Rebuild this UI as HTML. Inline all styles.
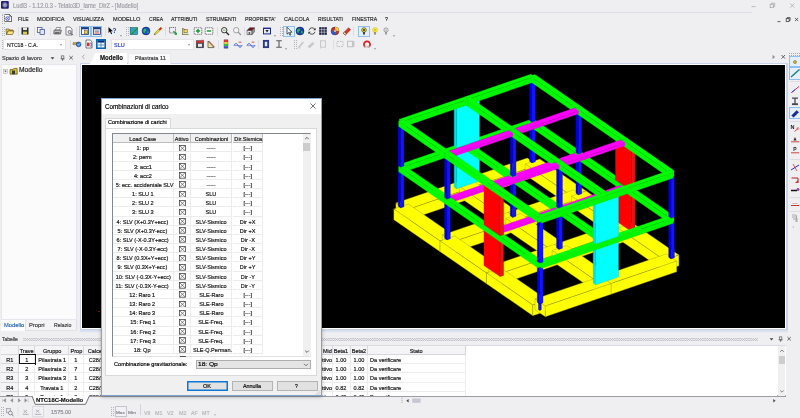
<!DOCTYPE html>
<html><head><meta charset="utf-8"><title>Ludi3</title><style>
*{box-sizing:border-box;margin:0;padding:0}
html,body{width:800px;height:418px;overflow:hidden;background:#efeff2;font-family:"Liberation Sans",sans-serif;}
#app{will-change:transform;position:relative;width:800px;height:418px;background:#efeff2;overflow:hidden;font-size:7px;color:#1e1e1e}
.abs{position:absolute}
.t{position:absolute;white-space:nowrap;line-height:1;-webkit-text-stroke:0.18px}
.ico{position:absolute;width:9px;height:9px}
.hl{position:absolute;border:1px solid #8cc0ee;background:#e3f0fc}
.combo{position:absolute;background:#fff;border:1px solid #e3e3e8}
.grip{position:absolute;width:3px;border-left:1px dotted #b4b4bc;border-right:1px dotted #b4b4bc}
.dd{position:absolute;width:0;height:0;border-left:1.6px solid transparent;border-right:1.6px solid transparent;border-top:2px solid #444}
table{border-collapse:collapse}
.cell{-webkit-text-stroke:0.18px;position:absolute;white-space:nowrap;text-align:center;line-height:9.14px;height:9.14px;font-size:6.3px;color:#111;overflow:visible}
.cb{position:absolute;width:5.4px;height:5.6px;border:0.7px solid #333;background:#fff}
.btn{position:absolute;background:#e1e1e1;border:1px solid #b4b4b4;text-align:center;font-size:6.6px;line-height:9px;color:#000}
</style></head><body><div id="app">
<div class="abs" style="left:0;top:0;width:800px;height:12px;background:#efeff2"></div>
<div class="abs" style="left:0;top:11.6px;width:752px;height:1px;background:#dcdeec"></div>
<svg class="abs" style="left:1px;top:1.4px" width="8" height="8" viewBox="0 0 8 8"><rect x="0" y="0" width="7.8" height="7.8" rx="1" fill="#22226e"/><circle cx="3.9" cy="3.9" r="2.3" fill="#c8cce8" stroke="#8a90c8" stroke-width="0.5"/><path d="M3.9 1.2v5.4M1.2 3.9h5.4M2 2l3.8 3.8M5.8 2L2 5.8" stroke="#22226e" stroke-width="0.55"/><circle cx="3.9" cy="3.9" r="0.8" fill="#f0f0ff"/></svg>
<div class="t" style="left:12.6px;top:2.6px;font-size:6.3px;color:#9c9ca4;transform-origin:0 0;transform:scaleX(0.912);">Ludi3 - 1.12.0.3 - Telaio3D_lame_DirZ - [Modello]</div>
<svg class="abs" style="left:739.5px;top:0" width="60" height="12" viewBox="0 0 60 12"><g stroke="#a9a9b0" stroke-width="0.8" fill="none"><path d="M11.5 6.6h4"/><rect x="30.2" y="4.3" width="3.3" height="3.3"/><path d="M31.4 4.3v-1.1h3.3v3.3h-1.2"/><path d="M50.3 3.6l4 4M54.3 3.6l-4 4"/></g></svg>
<div class="menu">
<svg class="abs" style="left:3.8px;top:13.8px" width="8" height="8" viewBox="0 0 8 8"><path d="M0.4 0.4h5l2.2 2.2v5H0.4z" fill="#fff" stroke="#222" stroke-width="0.7"/><path d="M5.4 0.4v2.2h2.2" fill="none" stroke="#222" stroke-width="0.5"/><circle cx="3.6" cy="4.6" r="1.9" fill="#dfe4ff" stroke="#3a48b8" stroke-width="0.7"/><path d="M2.3 3.3l2.6 2.6M4.9 3.3L2.3 5.900" stroke="#3a48b8" stroke-width="0.5"/></svg>
<div class="t" style="left:17.5px;top:15.6px;font-size:6.0px;color:#2a2a2a;transform-origin:0 0;transform:scaleX(0.829);">FILE</div>
<div class="t" style="left:37.0px;top:15.6px;font-size:6.0px;color:#2a2a2a;transform-origin:0 0;transform:scaleX(0.938);">MODIFICA</div>
<div class="t" style="left:73.0px;top:15.6px;font-size:6.0px;color:#2a2a2a;transform-origin:0 0;transform:scaleX(0.903);">VISUALIZZA</div>
<div class="t" style="left:112.5px;top:15.6px;font-size:6.0px;color:#2a2a2a;transform-origin:0 0;transform:scaleX(0.937);">MODELLO</div>
<div class="t" style="left:148.5px;top:15.6px;font-size:6.0px;color:#2a2a2a;transform-origin:0 0;transform:scaleX(0.840);">CREA</div>
<div class="t" style="left:170.5px;top:15.6px;font-size:6.0px;color:#2a2a2a;transform-origin:0 0;transform:scaleX(0.867);">ATTRIBUTI</div>
<div class="t" style="left:205.5px;top:15.6px;font-size:6.0px;color:#2a2a2a;transform-origin:0 0;transform:scaleX(0.871);">STRUMENTI</div>
<div class="t" style="left:244.5px;top:15.6px;font-size:6.0px;color:#2a2a2a;transform-origin:0 0;transform:scaleX(0.862);">PROPRIETA'</div>
<div class="t" style="left:283.5px;top:15.6px;font-size:6.0px;color:#2a2a2a;transform-origin:0 0;transform:scaleX(0.910);">CALCOLA</div>
<div class="t" style="left:317.5px;top:15.6px;font-size:6.0px;color:#2a2a2a;transform-origin:0 0;transform:scaleX(0.852);">RISULTATI</div>
<div class="t" style="left:352.0px;top:15.6px;font-size:6.0px;color:#2a2a2a;transform-origin:0 0;transform:scaleX(0.843);">FINESTRA</div>
<div class="t" style="left:385.0px;top:15.6px;font-size:6.0px;color:#2a2a2a;transform-origin:0 0;transform:scaleX(0.899);">?</div>
</div>
<svg class="abs" style="left:770px;top:14px" width="30" height="12" viewBox="0 0 30 12"><g stroke="#3c3c3c" stroke-width="0.8" fill="none"><path d="M7.5 7.6h3"/><rect x="16.2" y="4.6" width="2.9" height="2.9"/><path d="M17.2 4.6v-1h2.9v2.9h-1"/><path d="M25 3.9l3.2 3.2M28.2 3.9L25 7.1"/></g></svg>
<div class="hl" style="left:79.0px;top:25.6px;width:11.5px;height:11.4px"></div>
<div class="hl" style="left:90.5px;top:25.6px;width:11.5px;height:11.4px"></div>
<div class="hl" style="left:283.0px;top:25.6px;width:11.5px;height:11.4px"></div>
<div class="hl" style="left:358.0px;top:25.6px;width:11.5px;height:11.4px"></div>
<svg class="abs" style="left:4.5px;top:26.2px" width="10" height="10" viewBox="0 0 10 10"><path d="M1 3h3l1 1h3v1H3L1.5 8.5z" fill="#e8c84a" stroke="#5a4a10" stroke-width="0.6"/><path d="M1.5 8.5L3 5h6L7.5 8.5z" fill="#f7e38a" stroke="#5a4a10" stroke-width="0.6"/></svg>
<svg class="abs" style="left:20.0px;top:26.2px" width="10" height="10" viewBox="0 0 10 10"><rect x="1.5" y="1.5" width="7" height="7" fill="#2a2a2a"/><rect x="3" y="1.5" width="4" height="2.6" fill="#e8e8e8"/><rect x="3" y="5.6" width="4" height="2.9" fill="#d8d040"/></svg>
<svg class="abs" style="left:35.5px;top:26.2px" width="10" height="10" viewBox="0 0 10 10"><rect x="1.5" y="1.5" width="4.5" height="5" fill="#fff" stroke="#33448a" stroke-width="0.7"/><rect x="4" y="3.5" width="4.5" height="5" fill="#dfe6ff" stroke="#33448a" stroke-width="0.7"/></svg>
<svg class="abs" style="left:52.5px;top:26.2px" width="10" height="10" viewBox="0 0 10 10"><path d="M2.5 4l1-2.5h4l-1 2.5z" fill="#fff" stroke="#333" stroke-width="0.5"/><path d="M1 4.2h7.4l-1 3.8H0.8z" fill="#bdbdbd" stroke="#333" stroke-width="0.6"/><rect x="2" y="6.3" width="4.5" height="1.2" fill="#444"/></svg>
<svg class="abs" style="left:63.5px;top:26.2px" width="10" height="10" viewBox="0 0 10 10"><path d="M2 1h4l2 2v6H2z" fill="#fff" stroke="#333" stroke-width="0.6"/><circle cx="5.6" cy="6" r="1.6" fill="#cfe0ff" stroke="#333" stroke-width="0.6"/><path d="M6.8 7.2L8.8 9.2" stroke="#333" stroke-width="0.9"/></svg>
<svg class="abs" style="left:79.5px;top:26.2px" width="10" height="10" viewBox="0 0 10 10"><rect x="1.5" y="1.5" width="7" height="7" fill="#fff" stroke="#1a3a7a" stroke-width="0.8"/><rect x="1.5" y="1.5" width="7" height="1.8" fill="#1a3a7a"/><rect x="4.2" y="4.6" width="3.4" height="3.4" fill="#f0d040" stroke="#444" stroke-width="0.5"/></svg>
<svg class="abs" style="left:91.5px;top:26.2px" width="10" height="10" viewBox="0 0 10 10"><rect x="1.5" y="1.5" width="7" height="7" fill="#fff" stroke="#1a3a7a" stroke-width="0.8"/><rect x="1.5" y="1.5" width="7" height="1.8" fill="#1a3a7a"/><rect x="2.6" y="4.4" width="4.8" height="1.4" fill="#8a8a9a"/><rect x="2.6" y="6.5" width="4.8" height="1" fill="#c04040"/></svg>
<svg class="abs" style="left:107.0px;top:26.2px" width="10" height="10" viewBox="0 0 10 10"><path d="M1.5 1v6l1.5-1.4 1.1 2.6 1-.4-1.1-2.5H6z" fill="#111"/><text x="5.6" y="6.5" font-size="6.5" font-weight="bold" fill="#1a3a9a" font-family="Liberation Sans,sans-serif">?</text></svg>
<svg class="abs" style="left:128.5px;top:26.2px" width="10" height="10" viewBox="0 0 10 10"><rect x="1.2" y="1.6" width="7.4" height="7" fill="#30a0c8" stroke="#144" stroke-width="0.5"/><path d="M2 8L8.4 2" stroke="#30c040" stroke-width="1.6"/><path d="M2 8.6L8.6 2" stroke="#124" stroke-width="0.5"/></svg>
<svg class="abs" style="left:140.5px;top:26.2px" width="10" height="10" viewBox="0 0 10 10"><circle cx="5" cy="5" r="3.9" fill="#1a50c8" stroke="#0a1a50" stroke-width="0.6"/><path d="M3 3.2c1.2-.8 2.4-.2 2.2 1.1-.2 1.2-1.6.8-1.4 2.2.1.9-1 .6-1.4-.6-.3-1 .1-2.2.6-2.7z" fill="#30c048"/><path d="M6.4 5.4c.9-.3 1.6.3 1.2 1.3-.4.9-1.1 1.1-1.3.3z" fill="#30c048"/></svg>
<svg class="abs" style="left:152.5px;top:26.2px" width="10" height="10" viewBox="0 0 10 10"><path d="M1.2 8.8l1-2.2L7.800 1.200l1.200 1.200-5.400 5.400z" fill="#e8d838" stroke="#5a5010" stroke-width="0.400"/><path d="M5.600 3.400L7.800 1.200l1.200 1.200-2.200 2.200z" fill="#e02818"/><path d="M1.200 8.800l.5-1.200.7.700z" fill="#222"/></svg>
<svg class="abs" style="left:167.5px;top:26.2px" width="10" height="10" viewBox="0 0 10 10"><rect x="1.5" y="1.5" width="6" height="5.4" fill="none" stroke="#222" stroke-width="0.7" stroke-dasharray="1 0.8"/><path d="M5.4 5.2l3.4 3.2" stroke="#1a8a3a" stroke-width="1.1"/><rect x="6.6" y="6.6" width="2.2" height="2.2" fill="#2a9a4a"/></svg>
<svg class="abs" style="left:180.0px;top:26.2px" width="10" height="10" viewBox="0 0 10 10"><path d="M2 8.4h6.6M2.6 8.4V2" stroke="#6a6a20" stroke-width="0.8"/><rect x="4" y="3.6" width="3.2" height="3.2" fill="#f0e060" stroke="#444" stroke-width="0.5"/><path d="M3 2.6l2 1" stroke="#c03030" stroke-width="0.7"/></svg>
<svg class="abs" style="left:192.5px;top:26.2px" width="10" height="10" viewBox="0 0 10 10"><rect x="1.2" y="1.8" width="7.6" height="6.4" fill="#fff" stroke="#222" stroke-width="0.7" stroke-dasharray="1.2 0.8"/><path d="M2.8 5h4.4M5 3v4" stroke="#10a030" stroke-width="1.5"/></svg>
<svg class="abs" style="left:204.0px;top:26.2px" width="10" height="10" viewBox="0 0 10 10"><rect x="1.2" y="1.8" width="7.6" height="6.4" fill="#fff" stroke="#222" stroke-width="0.7" stroke-dasharray="1.2 0.8"/><path d="M2.8 5h4.4" stroke="#10a030" stroke-width="1.5"/></svg>
<svg class="abs" style="left:219.5px;top:26.2px" width="10" height="10" viewBox="0 0 10 10"><circle cx="4.2" cy="4.2" r="2.7" fill="#f4f8e8" stroke="#222" stroke-width="0.9"/><path d="M6.2 6.2L9 9" stroke="#222" stroke-width="1.3"/><path d="M3 4.2h2.4" stroke="#1a8a3a" stroke-width="0.7"/></svg>
<svg class="abs" style="left:231.5px;top:26.2px" width="10" height="10" viewBox="0 0 10 10"><circle cx="4.2" cy="4.2" r="2.7" fill="#f4f4f4" stroke="#9a9a9a" stroke-width="0.9"/><path d="M6.2 6.2L9 9" stroke="#9a9a9a" stroke-width="1.3"/></svg>
<svg class="abs" style="left:246.0px;top:26.2px" width="10" height="10" viewBox="0 0 10 10"><path d="M1 4.6l2.600-2.800h4.800L6 4.600z" fill="#7a1414" stroke="#222" stroke-width="0.5"/><path d="M1 4.600h5v4H1z" fill="#f0f0f0" stroke="#222" stroke-width="0.5"/><path d="M6 4.600l2.400-2.800v4L6 8.600z" fill="#9a9a9a" stroke="#222" stroke-width="0.5"/><rect x="2.600" y="6" width="1.600" height="2.600" fill="#555"/></svg>
<svg class="abs" style="left:261.5px;top:26.2px" width="10" height="10" viewBox="0 0 10 10"><rect x="1" y="1.6" width="8" height="6.8" fill="#1a2a8a"/><rect x="2" y="3" width="6" height="4.4" fill="#e8ecff"/><path d="M3.4 4h3.4L5 6.6z" fill="#222"/></svg>
<svg class="abs" style="left:283.5px;top:26.2px" width="10" height="10" viewBox="0 0 10 10"><path d="M3 1.2v7l1.7-1.6 1.2 2.6 1-.5-1.2-2.5H8z" fill="#fff" stroke="#111" stroke-width="0.7"/></svg>
<svg class="abs" style="left:295.0px;top:26.2px" width="10" height="10" viewBox="0 0 10 10"><circle cx="5" cy="5" r="4" fill="#1840b0" stroke="#081440" stroke-width="0.5"/><path d="M2.6 3c1.4-1.2 3-.4 2.6 1-.3 1.3-1.7 1-1.6 2.4.1 1-1.2.8-1.6-.6-.3-1 0-2.200.6-2.800z" fill="#28b840"/><path d="M6.200 5.200c1-.4 2 .4 1.600 1.500-.5 1-1.400 1.200-1.600.300z" fill="#28b840"/></svg>
<svg class="abs" style="left:306.5px;top:26.2px" width="10" height="10" viewBox="0 0 10 10"><path d="M2 4.200a3.200 3.200 0 0 1 6-0.600M8 5.800a3.200 3.200 0 0 1-6 .6" fill="none" stroke="#3a3a3a" stroke-width="0.9"/><path d="M8.600 1.800v2.400H6.200zM1.400 8.200V5.800h2.400z" fill="#3a3a3a"/></svg>
<svg class="abs" style="left:317.5px;top:26.2px" width="10" height="10" viewBox="0 0 10 10"><rect x="1.200" y="1.200" width="7.600" height="7.600" fill="#1a1a3a"/><path d="M1.200 3.700h7.600M1.200 6.200h7.600M3.700 1.200v7.600M6.200 1.200v7.600" stroke="#e8e8f0" stroke-width="0.600"/></svg>
<svg class="abs" style="left:330.0px;top:26.2px" width="10" height="10" viewBox="0 0 10 10"><circle cx="5" cy="5" r="3.900" fill="#d03030" stroke="#222" stroke-width="0.500"/><path d="M5 5V1.100A3.900 3.900 0 0 1 8.900 5z" fill="#f0d030"/><path d="M5 5H1.100A3.900 3.900 0 0 0 5 8.900z" fill="#2a5ad0"/><circle cx="5" cy="5" r="1.300" fill="#e8e8e8" stroke="#333" stroke-width="0.400"/></svg>
<svg class="abs" style="left:342.0px;top:26.2px" width="10" height="10" viewBox="0 0 10 10"><path d="M1.200 7.200L6.600 1.800l2 2L3.200 9.200z" fill="#d03828" stroke="#601008" stroke-width="0.400"/><path d="M1.200 7.200l1.300-1.300 2 2L3.200 9.200z" fill="#f0e0a0" stroke="#601008" stroke-width="0.400"/></svg>
<svg class="abs" style="left:358.5px;top:26.2px" width="10" height="10" viewBox="0 0 10 10"><circle cx="5" cy="4" r="2.300" fill="#f8e820" stroke="#222" stroke-width="0.600"/><rect x="4.200" y="6" width="1.600" height="2.600" fill="#222"/><circle cx="5" cy="4" r="0.900" fill="#222"/></svg>
<svg class="abs" style="left:370.0px;top:26.2px" width="10" height="10" viewBox="0 0 10 10"><circle cx="5" cy="4" r="2.400" fill="#f8f040" stroke="#c8c020" stroke-width="0.600"/><rect x="4.400" y="6.200" width="1.200" height="2.400" fill="#55553a"/><circle cx="5" cy="4" r="0.700" fill="#8a8a20"/></svg>
<svg class="abs" style="left:381.0px;top:26.2px" width="10" height="10" viewBox="0 0 10 10"><circle cx="5" cy="4" r="2.100" fill="#f4f4f4" stroke="#6a6a6a" stroke-width="0.600"/><rect x="4.500" y="6" width="1" height="2.600" fill="#5a5a5a"/><circle cx="5" cy="4" r="0.600" fill="#444"/></svg>
<div class="dd" style="left:119.9px;top:34.5px;border-top-color:#555;transform:scale(.7)"></div>
<div class="dd" style="left:273.9px;top:34.5px;border-top-color:#555;transform:scale(.7)"></div>
<div class="dd" style="left:392.9px;top:34.5px;border-top-color:#555;transform:scale(.7)"></div>
<div class="grip" style="left:1.5px;top:14px;height:10px"></div>
<div class="grip" style="left:1.5px;top:27px;height:9px"></div>
<div class="grip" style="left:279.5px;top:27px;height:9px"></div>
<div class="grip" style="left:125.5px;top:27px;height:9px"></div>
<div class="grip" style="left:1.5px;top:40px;height:9px"></div>
<div class="grip" style="left:293.5px;top:40px;height:9px"></div>
<div class="abs" style="left:18.3px;top:27px;width:1px;height:9px;background:#dcdce2"></div>
<div class="abs" style="left:34.0px;top:27px;width:1px;height:9px;background:#dcdce2"></div>
<div class="abs" style="left:49.5px;top:27px;width:1px;height:9px;background:#dcdce2"></div>
<div class="abs" style="left:76.0px;top:27px;width:1px;height:9px;background:#dcdce2"></div>
<div class="abs" style="left:104.5px;top:27px;width:1px;height:9px;background:#dcdce2"></div>
<div class="abs" style="left:165.0px;top:27px;width:1px;height:9px;background:#dcdce2"></div>
<div class="abs" style="left:217.0px;top:27px;width:1px;height:9px;background:#dcdce2"></div>
<div class="abs" style="left:244.0px;top:27px;width:1px;height:9px;background:#dcdce2"></div>
<div class="abs" style="left:353.0px;top:27px;width:1px;height:9px;background:#dcdce2"></div>
<div class="abs" style="left:69.5px;top:40px;width:1px;height:9px;background:#dcdce2"></div>
<div class="abs" style="left:217.5px;top:40px;width:1px;height:9px;background:#dcdce2"></div>
<div class="abs" style="left:257.5px;top:40px;width:1px;height:9px;background:#dcdce2"></div>
<div class="abs" style="left:319.5px;top:40px;width:1px;height:9px;background:#dcdce2"></div>
<div class="abs" style="left:333.0px;top:40px;width:1px;height:9px;background:#dcdce2"></div>
<div class="combo" style="left:3px;top:38.6px;width:62.5px;height:11.2px"></div>
<div class="t" style="left:6.5px;top:41.6px;font-size:6.0px;color:#222;transform-origin:0 0;transform:scaleX(0.861);">NTC18 - C.A.</div>
<div class="dd" style="left:60px;top:44px;transform:scale(.8)"></div>
<div class="combo" style="left:110.5px;top:38.6px;width:83px;height:11.2px"></div>
<div class="t" style="left:113.8px;top:41.6px;font-size:6.0px;color:#2a3ac8;transform-origin:0 0;transform:scaleX(0.917);">SLU</div>
<div class="dd" style="left:188px;top:44px;transform:scale(.8)"></div>
<svg class="abs" style="left:72.0px;top:39.2px" width="10" height="10" viewBox="0 0 10 10"><path d="M1 3.600h4.600v2H1z" fill="#d8b020" stroke="#5a4a10" stroke-width="0.400"/><circle cx="6.600" cy="5.400" r="2.400" fill="#2a7ad8" stroke="#0a2a6a" stroke-width="0.500"/><path d="M5.600 5.400l.8.800 1.400-1.600" stroke="#fff" stroke-width="0.700" fill="none"/></svg>
<svg class="abs" style="left:84.0px;top:39.2px" width="10" height="10" viewBox="0 0 10 10"><path d="M2 1h4.200L8 2.800V9H2z" fill="#fff" stroke="#222" stroke-width="0.600"/><rect x="3" y="3.600" width="2.600" height="3.600" fill="#d03030"/><path d="M6 4h1.200v3.200H6" stroke="#2a2a8a" stroke-width="0.600" fill="none"/></svg>
<svg class="abs" style="left:95.5px;top:39.2px" width="10" height="10" viewBox="0 0 10 10"><rect x="0" y="0" width="10" height="10" fill="#0a64b4"/><rect x="1.600" y="2" width="6.800" height="6.400" fill="#fff"/><rect x="1.600" y="2" width="6.800" height="1.600" fill="#0a2a6a"/><path d="M5 3.600v4.800M1.600 6h6.800" stroke="#0a64b4" stroke-width="0.700"/></svg>
<svg class="abs" style="left:194.5px;top:39.2px" width="10" height="10" viewBox="0 0 10 10"><rect x="1.400" y="1.800" width="7.200" height="7" fill="#4a4a52" stroke="#222" stroke-width="0.5"/><rect x="1.400" y="1.800" width="7.200" height="2" fill="#d03030"/><rect x="3" y="4.800" width="4" height="3" fill="#e8e8ec"/><rect x="6.400" y="0.800" width="2.400" height="2.400" fill="#e04040"/></svg>
<svg class="abs" style="left:205.5px;top:39.2px" width="10" height="10" viewBox="0 0 10 10"><path d="M2 8.600V2l6 6.600z" fill="#f4e8a0" stroke="#222" stroke-width="0.600"/><path d="M3 2.200l5.400 5.800" stroke="#d03030" stroke-width="0.900"/></svg>
<svg class="abs" style="left:220.5px;top:39.2px" width="10" height="10" viewBox="0 0 10 10"><rect x="3" y="0.800" width="4" height="2.200" fill="#e83030"/><rect x="3" y="3" width="4" height="2" fill="#f0d030"/><rect x="3" y="5" width="4" height="2.200" fill="#30c040"/><rect x="3" y="7.200" width="4" height="2" fill="#3050d8"/><rect x="3" y="0.800" width="4" height="8.400" fill="none" stroke="#555" stroke-width="0.4"/></svg>
<svg class="abs" style="left:233.0px;top:39.2px" width="10" height="10" viewBox="0 0 10 10"><path d="M1 6.400c1.400-2.400 2.600-2.400 4 0s2.600 2.400 4 0" fill="none" stroke="#2a4ad8" stroke-width="0.900"/><path d="M1 6.600h8" stroke="#2a4ad8" stroke-width="0.500"/><path d="M5.600 3.200h2.800" stroke="#d03030" stroke-width="0.800"/></svg>
<svg class="abs" style="left:245.5px;top:39.2px" width="10" height="10" viewBox="0 0 10 10"><path d="M1 6.400c1.400-2.400 2.600-2.400 4 0s2.600 2.400 4 0" fill="none" stroke="#2a4ad8" stroke-width="0.900"/><path d="M1 6.600h8" stroke="#2a4ad8" stroke-width="0.500"/><path d="M5.600 3.200h2.800" stroke="#d03030" stroke-width="0.800"/></svg>
<svg class="abs" style="left:260.5px;top:39.2px" width="10" height="10" viewBox="0 0 10 10"><rect x="2.200" y="1.200" width="5.600" height="7.600" fill="#2a3a9a" stroke="#0a1450" stroke-width="0.500"/><rect x="3.800" y="2.800" width="2.400" height="4.400" fill="#e8ecff"/></svg>
<svg class="abs" style="left:273.5px;top:39.2px" width="10" height="10" viewBox="0 0 10 10"><path d="M2.200 1.800h5.600M2.200 8.200h5.600M5 1.800v6.400" stroke="#5a5a5a" stroke-width="1.100"/></svg>
<svg class="abs" style="left:295.5px;top:39.2px" width="10" height="10" viewBox="0 0 10 10"><path d="M2 8l4.600-5.600 1.400 1.200L3.400 9z" fill="#c8c8cc"/><path d="M1.600 9h3" stroke="#c0c0c4" stroke-width="0.700"/></svg>
<svg class="abs" style="left:306.0px;top:39.2px" width="10" height="10" viewBox="0 0 10 10"><path d="M1.600 7.600l5-4.600 1.800 1.800-5 4.600z" fill="#c8c8cc"/></svg>
<svg class="abs" style="left:318.0px;top:39.2px" width="10" height="10" viewBox="0 0 10 10"><rect x="2.600" y="1.800" width="4.800" height="6.400" fill="none" stroke="#c4c4c8" stroke-width="0.900"/></svg>
<svg class="abs" style="left:334.5px;top:39.2px" width="10" height="10" viewBox="0 0 10 10"><rect x="2" y="2.400" width="6" height="5.200" fill="none" stroke="#b4b4b8" stroke-width="0.800" stroke-dasharray="1.800 1"/></svg>
<svg class="abs" style="left:346.0px;top:39.2px" width="10" height="10" viewBox="0 0 10 10"><rect x="1.600" y="2.200" width="5.400" height="5.600" fill="none" stroke="#b4b4b8" stroke-width="0.800"/><rect x="6" y="2.200" width="2.400" height="5.600" fill="#c4c4c8"/></svg>
<svg class="abs" style="left:361.5px;top:39.2px" width="10" height="10" viewBox="0 0 10 10"><path d="M3.600 8.200A3.100 3.100 0 1 1 6.400 8.200" fill="none" stroke="#e02020" stroke-width="1.700"/><rect x="2.400" y="7.400" width="1.800" height="1.200" fill="#f4f4f4" stroke="#888" stroke-width="0.300"/><rect x="5.800" y="7.400" width="1.800" height="1.200" fill="#f4f4f4" stroke="#888" stroke-width="0.300"/></svg>
<div class="dd" style="left:284.9px;top:47.500px;border-top-color:#555;transform:scale(.7)"></div>
<div class="dd" style="left:373.9px;top:47.500px;border-top-color:#555;transform:scale(.7)"></div>
<div class="t" style="left:2.0px;top:54.7px;font-size:6.2px;color:#3c3c3c;transform-origin:0 0;transform:scaleX(0.907);">Spazio di lavoro</div>
<svg class="abs" style="left:48px;top:53px" width="30" height="10" viewBox="0 0 30 10"><path d="M2.600 4.200h3.800l-1.900 2.200z" fill="#444"/><path d="M13.400 2.800h2.400v3h-2.400zM12.600 5.800h4M14.600 5.800v2.200" stroke="#555" stroke-width="0.700" fill="none"/><path d="M21.400 3l3.400 3.400M24.800 3l-3.400 3.400" stroke="#444" stroke-width="0.800"/></svg>
<div class="abs" style="left:0.500px;top:64px;width:76px;height:255.500px;background:#fbfbfc;border:1px solid #e6e6ec"></div>
<svg class="abs" style="left:2px;top:65.500px" width="20" height="11" viewBox="0 0 20 11"><rect x="1.500" y="3.200" width="4" height="4" fill="#fff" stroke="#9a9a9a" stroke-width="0.500"/><path d="M2.400 5.200h2.200M3.500 4.100v2.200" stroke="#333" stroke-width="0.500"/><path d="M8 3.600h3l.8-1.200h3.400v5.800H8z" fill="#d8c030" stroke="#4a3a08" stroke-width="0.600"/><rect x="10" y="4.600" width="3" height="3.600" fill="#3a3a3a"/></svg>
<div class="t" style="left:19.3px;top:66.5px;font-size:6.6px;color:#222;transform-origin:0 0;transform:scaleX(1.012);">Modello</div>
<div class="abs" style="left:24.500px;top:319.500px;width:52px;height:11px;background:#f4f4f7;border:1px solid #e0e0e6;border-top:none"></div>
<div class="abs" style="left:0.500px;top:319.500px;width:24.500px;height:11px;background:#fdfdfe"></div>
<div class="t" style="left:3.5px;top:322.1px;font-size:6.2px;color:#2a6ab4;transform-origin:0 0;transform:scaleX(0.935);">Modello</div>
<div class="t" style="left:28.5px;top:322.1px;font-size:6.2px;color:#3a3a3a;transform-origin:0 0;transform:scaleX(0.937);">Propri</div>
<div class="t" style="left:53.7px;top:322.1px;font-size:6.2px;color:#3a3a3a;transform-origin:0 0;transform:scaleX(0.837);">Relazio</div>
<div class="abs" style="left:79.800px;top:62.500px;width:707.800px;height:270.200px;background:linear-gradient(to bottom,#c9d4ea 0,#c9d4ea 266.500px,#dfe4f0 268.500px,#efeff2 270.200px)"></div>
<div class="abs" style="left:81.300px;top:63.600px;width:704.800px;height:265px;background:#fff"></div>
<div class="abs" style="left:94.500px;top:52.800px;width:32.500px;height:11px;background:#fff;border-radius:1.500px 1.500px 0 0"></div>
<svg class="abs" style="left:88.500px;top:52.800px" width="7" height="11" viewBox="0 0 7 11"><path d="M7 0C4.500 1 3.500 10 0 11H7z" fill="#fff"/></svg>
<div class="abs" style="left:128.300px;top:53px;width:42.700px;height:10.600px;background:#f9f9fc;border:1px solid #e9e9f0;border-bottom:none;border-radius:1.500px 1.500px 0 0"></div>
<div class="t" style="left:100.0px;top:54.5px;font-size:6.3px;color:#111;font-weight:bold;transform-origin:0 0;transform:scaleX(0.966);">Modello</div>
<div class="t" style="left:135.0px;top:54.5px;font-size:6.2px;color:#333;transform-origin:0 0;transform:scaleX(0.906);">Pilastrata 11</div>
<svg class="abs" style="left:80px;top:53px" width="8" height="8" viewBox="0 0 8 8"><path d="M4.400 1.600L2.400 3.800l2 2.200" fill="none" stroke="#9a9aa2" stroke-width="0.800"/></svg>
<svg class="abs" style="left:768.5px;top:52px" width="20" height="10" viewBox="0 0 20 10"><path d="M3.600 2.800v4.400l2.400-2.200z" fill="#8a8a90"/><path d="M12.600 3l3.400 3.600M16 3l-3.400 3.600" stroke="#444" stroke-width="0.800"/></svg>
<svg class="abs" style="left:82.300px;top:64.600px;background:#000" width="702.800" height="263" viewBox="82.300 64.600 702.800 263"><g stroke-width="0.350" stroke-linejoin="round">
<polygon points="461.9,180.0 527.6,157.5 537.9,164.7 472.2,187.2" fill="#ffff00" stroke="#8c8c00"/>
<polygon points="461.9,190.8 472.2,197.9 472.2,187.2 461.9,180.0" fill="#ffff00" stroke="#8c8c00"/>
<polygon points="472.2,197.9 537.9,175.4 537.9,164.7 472.2,187.2" fill="#ffff00" stroke="#8c8c00"/>
<polygon points="525.5,163.6 540.1,158.6 586.5,190.6 571.9,195.6" fill="#ffff00" stroke="#8c8c00"/>
<polygon points="525.5,174.3 571.9,206.3 571.9,195.6 525.5,163.6" fill="#ffff00" stroke="#8c8c00"/>
<polygon points="571.9,206.3 586.5,201.3 586.5,190.6 571.9,195.6" fill="#ffff00" stroke="#8c8c00"/>
<polygon points="529.9,125.3 533.3,124.2 535.7,125.8 532.3,127.0" fill="#1a1aff" stroke="#0000b4"/>
<polygon points="529.9,160.9 532.3,162.5 532.3,127.0 529.9,125.3" fill="#0000e6" stroke="#0000b4"/>
<polygon points="532.3,162.5 535.7,161.3 535.7,125.8 532.3,127.0" fill="#1414ff" stroke="#0000b4"/>
<polygon points="396.2,202.5 461.9,180.0 472.2,187.2 406.5,209.7" fill="#ffff00" stroke="#8c8c00"/>
<polygon points="396.2,213.3 406.5,220.4 406.5,209.7 396.2,202.5" fill="#ffff00" stroke="#8c8c00"/>
<polygon points="406.5,220.4 472.2,197.9 472.2,187.2 406.5,209.7" fill="#ffff00" stroke="#8c8c00"/>
<polygon points="459.8,186.1 474.4,181.1 520.8,213.1 506.1,218.1" fill="#ffff00" stroke="#8c8c00"/>
<polygon points="459.8,196.8 506.1,228.8 506.1,218.1 459.8,186.1" fill="#ffff00" stroke="#8c8c00"/>
<polygon points="506.1,228.8 520.8,223.8 520.8,213.1 506.1,218.1" fill="#ffff00" stroke="#8c8c00"/>
<polygon points="454.5,151.1 477.3,143.3 479.7,145.0 456.9,152.8" fill="#00ffff" stroke="#00c8c8"/>
<polygon points="454.5,186.6 456.9,188.4 456.9,152.8 454.5,151.1" fill="#00e0e6" stroke="#00c8c8"/>
<polygon points="456.9,188.4 479.7,180.6 479.7,145.0 456.9,152.8" fill="#00ffff" stroke="#00c8c8"/>
<polygon points="465.4,141.6 531.1,119.1 534.5,121.5 468.8,144.0" fill="#00ff00" stroke="#00e000"/>
<polygon points="465.4,146.9 468.8,149.3 468.8,144.0 465.4,141.6" fill="#00fa00" stroke="#00e000"/>
<polygon points="468.8,149.3 534.5,126.8 534.5,121.5 468.8,144.0" fill="#00f600" stroke="#00e000"/>
<polygon points="508.3,212.0 574.0,189.5 584.3,196.7 518.6,219.2" fill="#ffff00" stroke="#8c8c00"/>
<polygon points="508.3,222.8 518.6,229.9 518.6,219.2 508.3,212.0" fill="#ffff00" stroke="#8c8c00"/>
<polygon points="518.6,229.9 584.3,207.4 584.3,196.7 518.6,219.2" fill="#ffff00" stroke="#8c8c00"/>
<polygon points="571.9,195.6 586.5,190.6 632.8,222.6 618.2,227.6" fill="#ffff00" stroke="#8c8c00"/>
<polygon points="571.9,206.3 618.2,238.3 618.2,227.6 571.9,195.6" fill="#ffff00" stroke="#8c8c00"/>
<polygon points="618.2,238.3 632.8,233.3 632.8,222.6 618.2,227.6" fill="#ffff00" stroke="#8c8c00"/>
<polygon points="576.3,157.3 579.6,156.2 582.0,157.8 578.7,159.0" fill="#1a1aff" stroke="#0000b4"/>
<polygon points="576.3,192.9 578.7,194.5 578.7,159.0 576.3,157.3" fill="#0000e6" stroke="#0000b4"/>
<polygon points="578.7,194.5 582.0,193.3 582.0,157.8 578.7,159.0" fill="#1414ff" stroke="#0000b4"/>
<polygon points="530.4,121.1 535.2,119.5 581.6,151.5 576.7,153.1" fill="#00ff00" stroke="#00e000"/>
<polygon points="530.4,126.4 576.7,158.4 576.7,153.1 530.4,121.1" fill="#00fa00" stroke="#00e000"/>
<polygon points="576.7,158.4 581.6,156.8 581.6,151.5 576.7,153.1" fill="#00f600" stroke="#00e000"/>
<polygon points="529.9,80.0 533.3,78.9 535.7,80.5 532.3,81.7" fill="#1a1aff" stroke="#0000b4"/>
<polygon points="529.9,120.1 532.3,121.7 532.3,81.7 529.9,80.0" fill="#0000e6" stroke="#0000b4"/>
<polygon points="532.3,121.7 535.7,120.5 535.7,80.5 532.3,81.7" fill="#1414ff" stroke="#0000b4"/>
<polygon points="394.1,208.6 408.7,203.6 455.1,235.6 440.4,240.6" fill="#ffff00" stroke="#8c8c00"/>
<polygon points="394.1,219.3 440.4,251.3 440.4,240.6 394.1,208.6" fill="#ffff00" stroke="#8c8c00"/>
<polygon points="440.4,251.3 455.1,246.3 455.1,235.6 440.4,240.6" fill="#ffff00" stroke="#8c8c00"/>
<polygon points="398.5,170.3 401.9,169.2 404.3,170.8 400.9,172.0" fill="#1a1aff" stroke="#0000b4"/>
<polygon points="398.5,205.9 400.9,207.5 400.9,172.0 398.5,170.3" fill="#0000e6" stroke="#0000b4"/>
<polygon points="400.9,207.5 404.3,206.3 404.3,170.8 400.9,172.0" fill="#1414ff" stroke="#0000b4"/>
<polygon points="399.7,164.1 465.4,141.6 468.8,144.0 403.1,166.5" fill="#00ff00" stroke="#00e000"/>
<polygon points="399.7,169.4 403.1,171.8 403.1,166.5 399.7,164.1" fill="#00fa00" stroke="#00e000"/>
<polygon points="403.1,171.8 468.8,149.3 468.8,144.0 403.1,166.5" fill="#00f600" stroke="#00e000"/>
<polygon points="442.6,234.5 508.3,212.0 518.6,219.2 452.9,241.7" fill="#ffff00" stroke="#8c8c00"/>
<polygon points="442.6,245.3 452.9,252.4 452.9,241.7 442.6,234.5" fill="#ffff00" stroke="#8c8c00"/>
<polygon points="452.9,252.4 518.6,229.9 518.6,219.2 452.9,241.7" fill="#ffff00" stroke="#8c8c00"/>
<polygon points="506.1,218.1 520.8,213.1 567.1,245.1 552.5,250.1" fill="#ffff00" stroke="#8c8c00"/>
<polygon points="506.1,228.8 552.5,260.8 552.5,250.1 506.1,218.1" fill="#ffff00" stroke="#8c8c00"/>
<polygon points="552.5,260.8 567.1,255.8 567.1,245.1 552.5,250.1" fill="#ffff00" stroke="#8c8c00"/>
<polygon points="510.6,179.8 513.9,178.7 516.3,180.3 513.0,181.5" fill="#1a1aff" stroke="#0000b4"/>
<polygon points="510.6,215.4 513.0,217.0 513.0,181.5 510.6,179.8" fill="#0000e6" stroke="#0000b4"/>
<polygon points="513.0,217.0 516.3,215.8 516.3,180.3 513.0,181.5" fill="#1414ff" stroke="#0000b4"/>
<polygon points="554.6,244.0 620.3,221.5 630.6,228.7 564.9,251.2" fill="#ffff00" stroke="#8c8c00"/>
<polygon points="554.6,254.8 564.9,261.9 564.9,251.2 554.6,244.0" fill="#ffff00" stroke="#8c8c00"/>
<polygon points="564.9,261.9 630.6,239.4 630.6,228.7 564.9,251.2" fill="#ffff00" stroke="#8c8c00"/>
<polygon points="618.2,227.6 632.8,222.6 679.2,254.6 664.5,259.6" fill="#ffff00" stroke="#8c8c00"/>
<polygon points="618.2,238.3 664.5,270.3 664.5,259.6 618.2,227.6" fill="#ffff00" stroke="#8c8c00"/>
<polygon points="664.5,270.3 679.2,265.3 679.2,254.6 664.5,259.6" fill="#ffff00" stroke="#8c8c00"/>
<polygon points="615.7,184.6 619.2,183.4 635.3,194.5 631.8,195.7" fill="#ff0000" stroke="#c80000"/>
<polygon points="615.7,220.2 631.8,231.2 631.8,195.7 615.7,184.6" fill="#ff0000" stroke="#c80000"/>
<polygon points="631.8,231.2 635.3,230.0 635.3,194.5 631.8,195.7" fill="#e61414" stroke="#c80000"/>
<polygon points="576.7,153.1 581.6,151.5 627.9,183.5 623.1,185.1" fill="#00ff00" stroke="#00e000"/>
<polygon points="576.7,158.4 623.1,190.4 623.1,185.1 576.7,153.1" fill="#00fa00" stroke="#00e000"/>
<polygon points="623.1,190.4 627.9,188.8 627.9,183.5 623.1,185.1" fill="#00f600" stroke="#00e000"/>
<polygon points="576.3,112.0 579.6,110.9 582.0,112.5 578.7,113.7" fill="#1a1aff" stroke="#0000b4"/>
<polygon points="576.3,152.1 578.7,153.7 578.7,113.7 576.3,112.0" fill="#0000e6" stroke="#0000b4"/>
<polygon points="578.7,153.7 582.0,152.5 582.0,112.5 578.7,113.7" fill="#1414ff" stroke="#0000b4"/>
<polygon points="530.4,75.8 535.2,74.2 581.6,106.2 576.7,107.8" fill="#00ff00" stroke="#00e000"/>
<polygon points="530.4,81.1 576.7,113.1 576.7,107.8 530.4,75.8" fill="#00fa00" stroke="#00e000"/>
<polygon points="576.7,113.1 581.6,111.5 581.6,106.2 576.7,107.8" fill="#00f600" stroke="#00e000"/>
<polygon points="513.8,173.8 574.7,152.9 578.8,155.8 517.9,176.6" fill="#ff00ff" stroke="#dc00dc"/>
<polygon points="513.8,176.6 517.9,179.4 517.9,176.6 513.8,173.8" fill="#f800f8" stroke="#dc00dc"/>
<polygon points="517.9,179.4 578.8,158.6 578.8,155.8 517.9,176.6" fill="#f400f4" stroke="#dc00dc"/>
<polygon points="464.7,143.6 469.5,142.0 515.9,174.0 511.0,175.6" fill="#00ff00" stroke="#00e000"/>
<polygon points="464.7,148.9 511.0,180.9 511.0,175.6 464.7,143.6" fill="#00fa00" stroke="#00e000"/>
<polygon points="511.0,180.9 515.9,179.3 515.9,174.0 511.0,175.6" fill="#00f600" stroke="#00e000"/>
<polygon points="454.5,105.8 477.3,98.0 479.7,99.7 456.9,107.5" fill="#00ffff" stroke="#00c8c8"/>
<polygon points="454.5,145.8 456.9,147.6 456.9,107.5 454.5,105.8" fill="#00e0e6" stroke="#00c8c8"/>
<polygon points="456.9,147.6 479.7,139.8 479.7,99.7 456.9,107.5" fill="#00ffff" stroke="#00c8c8"/>
<polygon points="465.4,96.3 531.1,73.8 534.5,76.2 468.8,98.7" fill="#00ff00" stroke="#00e000"/>
<polygon points="465.4,101.6 468.8,104.0 468.8,98.7 465.4,96.3" fill="#00fa00" stroke="#00e000"/>
<polygon points="468.8,104.0 534.5,81.5 534.5,76.2 468.8,98.7" fill="#00f600" stroke="#00e000"/>
<polygon points="440.4,240.6 455.1,235.6 501.4,267.6 486.8,272.6" fill="#ffff00" stroke="#8c8c00"/>
<polygon points="440.4,251.3 486.8,283.3 486.8,272.6 440.4,240.6" fill="#ffff00" stroke="#8c8c00"/>
<polygon points="486.8,283.3 501.4,278.3 501.4,267.6 486.8,272.6" fill="#ffff00" stroke="#8c8c00"/>
<polygon points="444.9,202.3 448.2,201.2 450.6,202.8 447.3,204.0" fill="#1a1aff" stroke="#0000b4"/>
<polygon points="444.9,237.9 447.3,239.5 447.3,204.0 444.9,202.3" fill="#0000e6" stroke="#0000b4"/>
<polygon points="447.3,239.5 450.6,238.3 450.6,202.8 447.3,204.0" fill="#1414ff" stroke="#0000b4"/>
<polygon points="488.9,266.5 554.6,244.0 564.9,251.2 499.2,273.7" fill="#ffff00" stroke="#8c8c00"/>
<polygon points="488.9,277.3 499.2,284.4 499.2,273.7 488.9,266.5" fill="#ffff00" stroke="#8c8c00"/>
<polygon points="499.2,284.4 564.9,261.9 564.9,251.2 499.2,273.7" fill="#ffff00" stroke="#8c8c00"/>
<polygon points="552.5,250.1 567.1,245.1 613.5,277.1 598.8,282.1" fill="#ffff00" stroke="#8c8c00"/>
<polygon points="552.5,260.8 598.8,292.8 598.8,282.1 552.5,250.1" fill="#ffff00" stroke="#8c8c00"/>
<polygon points="598.8,292.8 613.5,287.8 613.5,277.1 598.8,282.1" fill="#ffff00" stroke="#8c8c00"/>
<polygon points="556.9,211.8 560.3,210.7 562.7,212.3 559.3,213.5" fill="#1a1aff" stroke="#0000b4"/>
<polygon points="556.9,247.4 559.3,249.0 559.3,213.5 556.9,211.8" fill="#0000e6" stroke="#0000b4"/>
<polygon points="559.3,249.0 562.7,247.8 562.7,212.3 559.3,213.5" fill="#1414ff" stroke="#0000b4"/>
<polygon points="601.0,276.0 666.7,253.5 677.0,260.7 611.3,283.2" fill="#ffff00" stroke="#8c8c00"/>
<polygon points="601.0,286.8 611.3,293.9 611.3,283.2 601.0,276.0" fill="#ffff00" stroke="#8c8c00"/>
<polygon points="611.3,293.9 677.0,271.4 677.0,260.7 611.3,283.2" fill="#ffff00" stroke="#8c8c00"/>
<polygon points="669.0,221.3 672.3,220.2 674.7,221.8 671.4,223.0" fill="#1a1aff" stroke="#0000b4"/>
<polygon points="669.0,256.9 671.4,258.5 671.4,223.0 669.0,221.3" fill="#0000e6" stroke="#0000b4"/>
<polygon points="671.4,258.5 674.7,257.3 674.7,221.8 671.4,223.0" fill="#1414ff" stroke="#0000b4"/>
<polygon points="623.1,185.1 627.9,183.5 674.3,215.5 669.4,217.1" fill="#00ff00" stroke="#00e000"/>
<polygon points="623.1,190.4 669.4,222.4 669.4,217.1 623.1,185.1" fill="#00fa00" stroke="#00e000"/>
<polygon points="669.4,222.4 674.3,220.8 674.3,215.5 669.4,217.1" fill="#00f600" stroke="#00e000"/>
<polygon points="615.7,139.3 619.2,138.1 635.3,149.2 631.8,150.4" fill="#ff0000" stroke="#c80000"/>
<polygon points="615.7,179.4 631.8,190.4 631.8,150.4 615.7,139.3" fill="#ff0000" stroke="#c80000"/>
<polygon points="631.8,190.4 635.3,189.2 635.3,149.2 631.8,150.4" fill="#e61414" stroke="#c80000"/>
<polygon points="576.7,107.8 581.6,106.2 627.9,138.2 623.1,139.8" fill="#00ff00" stroke="#00e000"/>
<polygon points="576.7,113.1 623.1,145.1 623.1,139.8 576.7,107.8" fill="#00fa00" stroke="#00e000"/>
<polygon points="623.1,145.1 627.9,143.5 627.9,138.2 623.1,139.8" fill="#00f600" stroke="#00e000"/>
<polygon points="513.8,128.5 574.7,107.6 578.8,110.5 517.9,131.3" fill="#ff00ff" stroke="#dc00dc"/>
<polygon points="513.8,131.3 517.9,134.1 517.9,131.3 513.8,128.5" fill="#f800f8" stroke="#dc00dc"/>
<polygon points="517.9,134.1 578.8,113.3 578.8,110.5 517.9,131.3" fill="#f400f4" stroke="#dc00dc"/>
<polygon points="560.1,205.8 621.0,184.9 625.2,187.8 564.3,208.6" fill="#ff00ff" stroke="#dc00dc"/>
<polygon points="560.1,208.6 564.3,211.4 564.3,208.6 560.1,205.8" fill="#f800f8" stroke="#dc00dc"/>
<polygon points="564.3,211.4 625.2,190.6 625.2,187.8 564.3,208.6" fill="#f400f4" stroke="#dc00dc"/>
<polygon points="511.0,175.6 515.9,174.0 562.2,206.0 557.4,207.6" fill="#00ff00" stroke="#00e000"/>
<polygon points="511.0,180.9 557.4,212.9 557.4,207.6 511.0,175.6" fill="#00fa00" stroke="#00e000"/>
<polygon points="557.4,212.9 562.2,211.3 562.2,206.0 557.4,207.6" fill="#00f600" stroke="#00e000"/>
<polygon points="510.6,134.5 513.9,133.4 516.3,135.0 513.0,136.2" fill="#1a1aff" stroke="#0000b4"/>
<polygon points="510.6,174.6 513.0,176.2 513.0,136.2 510.6,134.5" fill="#0000e6" stroke="#0000b4"/>
<polygon points="513.0,176.2 516.3,175.0 516.3,135.0 513.0,136.2" fill="#1414ff" stroke="#0000b4"/>
<polygon points="464.7,98.3 469.5,96.7 515.9,128.7 511.0,130.3" fill="#00ff00" stroke="#00e000"/>
<polygon points="464.7,103.6 511.0,135.6 511.0,130.3 464.7,98.3" fill="#00fa00" stroke="#00e000"/>
<polygon points="511.0,135.6 515.9,134.0 515.9,128.7 511.0,130.3" fill="#00f600" stroke="#00e000"/>
<polygon points="448.1,196.3 509.0,175.4 513.1,178.3 452.2,199.1" fill="#ff00ff" stroke="#dc00dc"/>
<polygon points="448.1,199.1 452.2,201.9 452.2,199.1 448.1,196.3" fill="#f800f8" stroke="#dc00dc"/>
<polygon points="452.2,201.9 513.1,181.1 513.1,178.3 452.2,199.1" fill="#f400f4" stroke="#dc00dc"/>
<polygon points="399.0,166.1 403.8,164.5 450.2,196.5 445.3,198.1" fill="#00ff00" stroke="#00e000"/>
<polygon points="399.0,171.4 445.3,203.4 445.3,198.1 399.0,166.1" fill="#00fa00" stroke="#00e000"/>
<polygon points="445.3,203.4 450.2,201.8 450.2,196.5 445.3,198.1" fill="#00f600" stroke="#00e000"/>
<polygon points="398.5,125.0 401.9,123.9 404.3,125.5 400.9,126.7" fill="#1a1aff" stroke="#0000b4"/>
<polygon points="398.5,165.1 400.9,166.7 400.9,126.7 398.5,125.0" fill="#0000e6" stroke="#0000b4"/>
<polygon points="400.9,166.7 404.3,165.5 404.3,125.5 400.9,126.7" fill="#1414ff" stroke="#0000b4"/>
<polygon points="399.7,118.8 465.4,96.3 468.8,98.7 403.1,121.2" fill="#00ff00" stroke="#00e000"/>
<polygon points="399.7,124.1 403.1,126.5 403.1,121.2 399.7,118.8" fill="#00fa00" stroke="#00e000"/>
<polygon points="403.1,126.5 468.8,104.0 468.8,98.7 403.1,121.2" fill="#00f600" stroke="#00e000"/>
<polygon points="486.8,272.6 501.4,267.6 547.8,299.6 533.1,304.6" fill="#ffff00" stroke="#8c8c00"/>
<polygon points="486.8,283.3 533.1,315.3 533.1,304.6 486.8,272.6" fill="#ffff00" stroke="#8c8c00"/>
<polygon points="533.1,315.3 547.8,310.3 547.8,299.6 533.1,304.6" fill="#ffff00" stroke="#8c8c00"/>
<polygon points="484.3,229.6 487.8,228.4 503.9,239.5 500.4,240.7" fill="#ff0000" stroke="#c80000"/>
<polygon points="484.3,265.2 500.4,276.2 500.4,240.7 484.3,229.6" fill="#ff0000" stroke="#c80000"/>
<polygon points="500.4,276.2 503.9,275.0 503.9,239.5 500.4,240.7" fill="#e61414" stroke="#c80000"/>
<polygon points="535.3,298.5 601.0,276.0 611.3,283.2 545.6,305.7" fill="#ffff00" stroke="#8c8c00"/>
<polygon points="535.3,309.3 545.6,316.4 545.6,305.7 535.3,298.5" fill="#ffff00" stroke="#8c8c00"/>
<polygon points="545.6,316.4 611.3,293.9 611.3,283.2 545.6,305.7" fill="#ffff00" stroke="#8c8c00"/>
<polygon points="593.5,247.1 616.3,239.3 618.8,241.0 596.0,248.8" fill="#00ffff" stroke="#00c8c8"/>
<polygon points="593.5,282.6 596.0,284.4 596.0,248.8 593.5,247.1" fill="#00e0e6" stroke="#00c8c8"/>
<polygon points="596.0,284.4 618.8,276.6 618.8,241.0 596.0,248.8" fill="#00ffff" stroke="#00c8c8"/>
<polygon points="557.4,207.6 562.2,206.0 608.6,238.0 603.7,239.6" fill="#00ff00" stroke="#00e000"/>
<polygon points="557.4,212.9 603.7,244.9 603.7,239.6 557.4,207.6" fill="#00fa00" stroke="#00e000"/>
<polygon points="603.7,244.9 608.6,243.3 608.6,238.0 603.7,239.6" fill="#00f600" stroke="#00e000"/>
<polygon points="556.9,166.5 560.3,165.4 562.7,167.0 559.3,168.2" fill="#1a1aff" stroke="#0000b4"/>
<polygon points="556.9,206.6 559.3,208.2 559.3,168.2 556.9,166.5" fill="#0000e6" stroke="#0000b4"/>
<polygon points="559.3,208.2 562.7,207.0 562.7,167.0 559.3,168.2" fill="#1414ff" stroke="#0000b4"/>
<polygon points="494.4,228.3 555.3,207.4 559.5,210.3 498.6,231.1" fill="#ff00ff" stroke="#dc00dc"/>
<polygon points="494.4,231.1 498.6,233.9 498.6,231.1 494.4,228.3" fill="#f800f8" stroke="#dc00dc"/>
<polygon points="498.6,233.9 559.5,213.1 559.5,210.3 498.6,231.1" fill="#f400f4" stroke="#dc00dc"/>
<polygon points="445.3,198.1 450.2,196.5 496.5,228.5 491.7,230.1" fill="#00ff00" stroke="#00e000"/>
<polygon points="445.3,203.4 491.7,235.4 491.7,230.1 445.3,198.1" fill="#00fa00" stroke="#00e000"/>
<polygon points="491.7,235.4 496.5,233.8 496.5,228.5 491.7,230.1" fill="#00f600" stroke="#00e000"/>
<polygon points="444.9,157.0 448.2,155.9 450.6,157.5 447.3,158.7" fill="#1a1aff" stroke="#0000b4"/>
<polygon points="444.9,197.1 447.3,198.7 447.3,158.7 444.9,157.0" fill="#0000e6" stroke="#0000b4"/>
<polygon points="447.3,198.7 450.6,197.5 450.6,157.5 447.3,158.7" fill="#1414ff" stroke="#0000b4"/>
<polygon points="604.5,237.6 670.2,215.1 673.5,217.5 607.8,240.0" fill="#00ff00" stroke="#00e000"/>
<polygon points="604.5,242.9 607.8,245.3 607.8,240.0 604.5,237.6" fill="#00fa00" stroke="#00e000"/>
<polygon points="607.8,245.3 673.5,222.8 673.5,217.5 607.8,240.0" fill="#00f600" stroke="#00e000"/>
<polygon points="669.0,176.0 672.3,174.9 674.7,176.5 671.4,177.7" fill="#1a1aff" stroke="#0000b4"/>
<polygon points="669.0,216.1 671.4,217.7 671.4,177.7 669.0,176.0" fill="#0000e6" stroke="#0000b4"/>
<polygon points="671.4,217.7 674.7,216.5 674.7,176.5 671.4,177.7" fill="#1414ff" stroke="#0000b4"/>
<polygon points="623.1,139.8 627.9,138.2 674.3,170.2 669.4,171.8" fill="#00ff00" stroke="#00e000"/>
<polygon points="623.1,145.1 669.4,177.1 669.4,171.8 623.1,139.8" fill="#00fa00" stroke="#00e000"/>
<polygon points="669.4,177.1 674.3,175.5 674.3,170.2 669.4,171.8" fill="#00f600" stroke="#00e000"/>
<polygon points="560.1,160.5 621.0,139.6 625.2,142.5 564.3,163.3" fill="#ff00ff" stroke="#dc00dc"/>
<polygon points="560.1,163.3 564.3,166.1 564.3,163.3 560.1,160.5" fill="#f800f8" stroke="#dc00dc"/>
<polygon points="564.3,166.1 625.2,145.3 625.2,142.5 564.3,163.3" fill="#f400f4" stroke="#dc00dc"/>
<polygon points="511.0,130.3 515.9,128.7 562.2,160.7 557.4,162.3" fill="#00ff00" stroke="#00e000"/>
<polygon points="511.0,135.6 557.4,167.6 557.4,162.3 511.0,130.3" fill="#00fa00" stroke="#00e000"/>
<polygon points="557.4,167.6 562.2,166.0 562.2,160.7 557.4,162.3" fill="#00f600" stroke="#00e000"/>
<polygon points="448.1,151.0 509.0,130.1 513.1,133.0 452.2,153.8" fill="#ff00ff" stroke="#dc00dc"/>
<polygon points="448.1,153.8 452.2,156.6 452.2,153.8 448.1,151.0" fill="#f800f8" stroke="#dc00dc"/>
<polygon points="452.2,156.6 513.1,135.8 513.1,133.0 452.2,153.8" fill="#f400f4" stroke="#dc00dc"/>
<polygon points="399.0,120.8 403.8,119.2 450.2,151.2 445.3,152.8" fill="#00ff00" stroke="#00e000"/>
<polygon points="399.0,126.1 445.3,158.1 445.3,152.8 399.0,120.8" fill="#00fa00" stroke="#00e000"/>
<polygon points="445.3,158.1 450.2,156.5 450.2,151.2 445.3,152.8" fill="#00f600" stroke="#00e000"/>
<polygon points="538.8,302.7 540.5,302.1 541.6,302.9 540.0,303.5" fill="#1a1aff" stroke="#0000b4"/>
<polygon points="538.8,309.2 540.0,310.0 540.0,303.5 538.8,302.7" fill="#0000e6" stroke="#0000b4"/>
<polygon points="540.0,310.0 541.6,309.4 541.6,302.9 540.0,303.5" fill="#1414ff" stroke="#0000b4"/>
<polygon points="537.6,266.3 540.9,265.2 543.3,266.8 540.0,268.0" fill="#1a1aff" stroke="#0000b4"/>
<polygon points="537.6,301.9 540.0,303.5 540.0,268.0 537.6,266.3" fill="#0000e6" stroke="#0000b4"/>
<polygon points="540.0,303.5 543.3,302.3 543.3,266.8 540.0,268.0" fill="#1414ff" stroke="#0000b4"/>
<polygon points="491.7,230.1 496.5,228.5 542.9,260.5 538.0,262.1" fill="#00ff00" stroke="#00e000"/>
<polygon points="491.7,235.4 538.0,267.4 538.0,262.1 491.7,230.1" fill="#00fa00" stroke="#00e000"/>
<polygon points="538.0,267.4 542.9,265.8 542.9,260.5 538.0,262.1" fill="#00f600" stroke="#00e000"/>
<polygon points="484.3,184.3 487.8,183.1 503.9,194.2 500.4,195.4" fill="#ff0000" stroke="#c80000"/>
<polygon points="484.3,224.4 500.4,235.4 500.4,195.4 484.3,184.3" fill="#ff0000" stroke="#c80000"/>
<polygon points="500.4,235.4 503.9,234.2 503.9,194.2 500.4,195.4" fill="#e61414" stroke="#c80000"/>
<polygon points="538.8,260.1 604.5,237.6 607.8,240.0 542.1,262.5" fill="#00ff00" stroke="#00e000"/>
<polygon points="538.8,265.4 542.1,267.8 542.1,262.5 538.8,260.1" fill="#00fa00" stroke="#00e000"/>
<polygon points="542.1,267.8 607.8,245.3 607.8,240.0 542.1,262.5" fill="#00f600" stroke="#00e000"/>
<polygon points="593.5,201.8 616.3,194.0 618.8,195.7 596.0,203.5" fill="#00ffff" stroke="#00c8c8"/>
<polygon points="593.5,241.8 596.0,243.6 596.0,203.5 593.5,201.8" fill="#00e0e6" stroke="#00c8c8"/>
<polygon points="596.0,243.6 618.8,235.8 618.8,195.7 596.0,203.5" fill="#00ffff" stroke="#00c8c8"/>
<polygon points="557.4,162.3 562.2,160.7 608.6,192.7 603.7,194.3" fill="#00ff00" stroke="#00e000"/>
<polygon points="557.4,167.6 603.7,199.6 603.7,194.3 557.4,162.3" fill="#00fa00" stroke="#00e000"/>
<polygon points="603.7,199.6 608.6,198.0 608.6,192.7 603.7,194.3" fill="#00f600" stroke="#00e000"/>
<polygon points="494.4,183.0 555.3,162.1 559.5,165.0 498.6,185.8" fill="#ff00ff" stroke="#dc00dc"/>
<polygon points="494.4,185.8 498.6,188.6 498.6,185.8 494.4,183.0" fill="#f800f8" stroke="#dc00dc"/>
<polygon points="498.6,188.6 559.5,167.8 559.5,165.0 498.6,185.8" fill="#f400f4" stroke="#dc00dc"/>
<polygon points="445.3,152.8 450.2,151.2 496.5,183.2 491.7,184.8" fill="#00ff00" stroke="#00e000"/>
<polygon points="445.3,158.1 491.7,190.1 491.7,184.8 445.3,152.8" fill="#00fa00" stroke="#00e000"/>
<polygon points="491.7,190.1 496.5,188.5 496.5,183.2 491.7,184.8" fill="#00f600" stroke="#00e000"/>
<polygon points="604.5,192.3 670.2,169.8 673.5,172.2 607.8,194.7" fill="#00ff00" stroke="#00e000"/>
<polygon points="604.5,197.6 607.8,200.0 607.8,194.7 604.5,192.3" fill="#00fa00" stroke="#00e000"/>
<polygon points="607.8,200.0 673.5,177.5 673.5,172.2 607.8,194.7" fill="#00f600" stroke="#00e000"/>
<polygon points="537.6,221.0 540.9,219.9 543.3,221.5 540.0,222.7" fill="#1a1aff" stroke="#0000b4"/>
<polygon points="537.6,261.1 540.0,262.7 540.0,222.7 537.6,221.0" fill="#0000e6" stroke="#0000b4"/>
<polygon points="540.0,262.7 543.3,261.5 543.3,221.5 540.0,222.7" fill="#1414ff" stroke="#0000b4"/>
<polygon points="491.7,184.8 496.5,183.2 542.9,215.2 538.0,216.8" fill="#00ff00" stroke="#00e000"/>
<polygon points="491.7,190.1 538.0,222.1 538.0,216.8 491.7,184.8" fill="#00fa00" stroke="#00e000"/>
<polygon points="538.0,222.1 542.9,220.5 542.9,215.2 538.0,216.8" fill="#00f600" stroke="#00e000"/>
<polygon points="538.8,214.8 604.5,192.3 607.8,194.7 542.1,217.2" fill="#00ff00" stroke="#00e000"/>
<polygon points="538.8,220.1 542.1,222.5 542.1,217.2 538.8,214.8" fill="#00fa00" stroke="#00e000"/>
<polygon points="542.1,222.5 607.8,200.0 607.8,194.7 542.1,217.2" fill="#00f600" stroke="#00e000"/>
</g><rect x="98.6" y="310.6" width="1.6" height="0.9" fill="#c01818"/></svg>
<div class="grip" style="left:789px;top:52.800px;height:3px;width:11px;border:none;border-top:1px dotted #a4a4ac;border-bottom:1px dotted #a4a4ac"></div>
<div class="hl" style="left:789px;top:56.400px;width:12px;height:11px"></div>
<div class="hl" style="left:789px;top:66.600px;width:12px;height:13px"></div>
<div class="hl" style="left:789px;top:106.500px;width:12px;height:12.400px"></div>
<svg class="abs" style="left:789.5px;top:56.6px" width="10" height="10" viewBox="0 0 10 10"><circle cx="5" cy="5" r="1.500" fill="#d8c828" stroke="#4a4a10" stroke-width="0.500"/></svg>
<svg class="abs" style="left:789.5px;top:68.3px" width="10" height="10" viewBox="0 0 10 10"><path d="M1 9L9.500 1.500" stroke="#0a5a6a" stroke-width="1.200"/><path d="M1.400 8.600L9.500 1.700" stroke="#30c8c8" stroke-width="0.500"/></svg>
<svg class="abs" style="left:789.5px;top:83.7px" width="10" height="10" viewBox="0 0 10 10"><path d="M1.500 8.500L9 2.500" stroke="#d03060" stroke-width="1"/><path d="M1.500 8.500L5 5.700" stroke="#4040d0" stroke-width="1"/></svg>
<svg class="abs" style="left:789.5px;top:95.7px" width="10" height="10" viewBox="0 0 10 10"><path d="M2 2.200h6M2 8h6M5 2.200V8" stroke="#4a4a4a" stroke-width="1.300"/><path d="M2 8.600h6" stroke="#222" stroke-width="0.600"/></svg>
<svg class="abs" style="left:789.5px;top:107.6px" width="10" height="10" viewBox="0 0 10 10"><path d="M1.600 7.600L6.600 2.600l2 1.600-5 5z" fill="#1a2ab0" stroke="#0a0a50" stroke-width="0.400"/></svg>
<svg class="abs" style="left:789.5px;top:123.2px" width="10" height="10" viewBox="0 0 10 10"><text x="0.500" y="5.500" font-size="5.500" font-weight="bold" fill="#222" font-family="Liberation Sans,sans-serif">N</text><path d="M4.500 8.500l3.500-3" stroke="#d03030" stroke-width="0.900"/><circle cx="8" cy="5.500" r="1" fill="none" stroke="#d03030" stroke-width="0.500"/></svg>
<svg class="abs" style="left:789.5px;top:134.0px" width="10" height="10" viewBox="0 0 10 10"><path d="M3.400 6.500L5 3l1.600 3.500z" fill="#333"/><path d="M1 7.800h8" stroke="#d03030" stroke-width="0.900"/></svg>
<svg class="abs" style="left:789.5px;top:145.4px" width="10" height="10" viewBox="0 0 10 10"><text x="3.200" y="5.800" font-size="5" font-weight="bold" fill="#222" font-family="Liberation Sans,sans-serif">P</text><path d="M1 7.800h8" stroke="#d03030" stroke-width="0.900"/></svg>
<svg class="abs" style="left:789.5px;top:162.2px" width="10" height="10" viewBox="0 0 10 10"><path d="M1 8l8-5" stroke="#2030d0" stroke-width="1"/><path d="M3 2l4 7" stroke="#d03030" stroke-width="0.800"/></svg>
<svg class="abs" style="left:789.5px;top:174.9px" width="10" height="10" viewBox="0 0 10 10"><path d="M1.500 3h6.500v5" stroke="#b02020" stroke-width="1" fill="none"/><path d="M5 8l3-3v3z" fill="#d03030"/></svg>
<svg class="abs" style="left:789.5px;top:185.2px" width="10" height="10" viewBox="0 0 10 10"><path d="M1 5.500h6" stroke="#111" stroke-width="1.500"/><circle cx="8" cy="4.500" r="1.200" fill="#d04080" stroke="#4040d0" stroke-width="0.500"/></svg>
<svg class="abs" style="left:789.5px;top:198.1px" width="10" height="10" viewBox="0 0 10 10"><path d="M1 7.500h8" stroke="#d03030" stroke-width="1"/><path d="M2.500 5.500h5" stroke="#c0a0a0" stroke-width="0.700"/></svg>
<svg class="abs" style="left:789.5px;top:213.2px" width="10" height="10" viewBox="0 0 10 10"><path d="M2 2h4M2 4h5M3 6h5M5 8h3" stroke="#aaa" stroke-width="1"/><path d="M6.500 2v6.500" stroke="#999" stroke-width="0.700"/></svg>
<div class="abs" style="left:790px;top:81.0px;width:10px;height:1px;background:#dcdce2"></div>
<div class="abs" style="left:790px;top:120.5px;width:10px;height:1px;background:#dcdce2"></div>
<div class="abs" style="left:790px;top:158.8px;width:10px;height:1px;background:#dcdce2"></div>
<div class="abs" style="left:790px;top:196.6px;width:10px;height:1px;background:#dcdce2"></div>
<div class="abs" style="left:790px;top:210.6px;width:10px;height:1px;background:#dcdce2"></div>
<div class="dd" style="left:791.500px;top:226px;border-top-color:#666;transform:rotate(90deg) scale(.6)"></div>
<div class="t" style="left:2.3px;top:336.4px;font-size:6.0px;color:#3c3c3c;transform-origin:0 0;transform:scaleX(0.836);">Tabelle</div>
<svg class="abs" style="left:23px;top:338px" width="735" height="3" viewBox="0 0 735 3"><defs><pattern id="gp" width="2.200" height="3" patternUnits="userSpaceOnUse"><path d="M0 0L2.200 3M2.200 0L0 3" stroke="#b4b4c0" stroke-width="0.650" fill="none"/></pattern></defs><rect width="735" height="3" fill="url(#gp)"/></svg>
<svg class="abs" style="left:766px;top:334px" width="30" height="10" viewBox="0 0 30 10"><path d="M3.600 4.200h3.800l-1.900 2.200z" fill="#444"/><path d="M13.400 2.800h2.400v3h-2.400zM12.600 5.800h4M14.600 5.800v2.200" stroke="#555" stroke-width="0.700" fill="none"/><path d="M21.400 3l3.400 3.400M24.800 3l-3.400 3.400" stroke="#444" stroke-width="0.800"/></svg>
<div class="abs" style="left:0.500px;top:345.300px;width:785px;height:51px;background:#fff;border-top:1px solid #dcdce0;border-bottom:1px solid #a8a8ae"></div>
<div class="cell" style="left:0.50px;top:345.50px;width:18.80px;height:9.30px;line-height:10.20px;background:#f4f4f6;border-right:1px solid #d6d6dc;border-bottom:1px solid #d6d6dc;text-align:center;padding-left:0.0px;font-size:6.1px"><span style="display:inline-block;transform:scaleX(0.91);transform-origin:50% 50%"></span></div>
<div class="cell" style="left:19.30px;top:345.50px;width:16.10px;height:9.30px;line-height:10.20px;background:#f4f4f6;border-right:1px solid #d6d6dc;border-bottom:1px solid #d6d6dc;text-align:center;padding-left:0.0px;font-size:6.1px"><span style="display:inline-block;transform:scaleX(0.91);transform-origin:50% 50%">Trave</span></div>
<div class="cell" style="left:35.40px;top:345.50px;width:33.90px;height:9.30px;line-height:10.20px;background:#f4f4f6;border-right:1px solid #d6d6dc;border-bottom:1px solid #d6d6dc;text-align:center;padding-left:0.0px;font-size:6.1px"><span style="display:inline-block;transform:scaleX(0.91);transform-origin:50% 50%">Gruppo</span></div>
<div class="cell" style="left:69.30px;top:345.50px;width:14.40px;height:9.30px;line-height:10.20px;background:#f4f4f6;border-right:1px solid #d6d6dc;border-bottom:1px solid #d6d6dc;text-align:center;padding-left:0.0px;font-size:6.1px"><span style="display:inline-block;transform:scaleX(0.91);transform-origin:50% 50%">Prop</span></div>
<div class="cell" style="left:83.70px;top:345.50px;width:26.30px;height:9.30px;line-height:10.20px;background:#f4f4f6;border-right:1px solid #d6d6dc;border-bottom:1px solid #d6d6dc;text-align:center;padding-left:0.0px;font-size:6.1px"><span style="display:inline-block;transform:scaleX(0.91);transform-origin:50% 50%">Calces</span></div>
<div class="cell" style="left:0.50px;top:354.80px;width:18.80px;height:9.30px;line-height:10.20px;background:#f4f4f6;border-right:1px solid #d6d6dc;border-bottom:1px solid #d6d6dc;text-align:center;padding-left:0.0px;font-size:6.1px"><span style="display:inline-block;transform:scaleX(0.91);transform-origin:50% 50%">R1</span></div>
<div class="cell" style="left:19.30px;top:354.80px;width:16.10px;height:9.30px;line-height:10.20px;background:#fff;border-right:1px solid #ededf0;border-bottom:1px solid #ededf0;text-align:center;padding-left:0.0px;font-size:6.1px"><span style="display:inline-block;transform:scaleX(0.91);transform-origin:50% 50%">1</span></div>
<div class="cell" style="left:35.40px;top:354.80px;width:33.90px;height:9.30px;line-height:10.20px;background:#fff;border-right:1px solid #ededf0;border-bottom:1px solid #ededf0;text-align:center;padding-left:0.0px;font-size:6.1px"><span style="display:inline-block;transform:scaleX(0.91);transform-origin:50% 50%">Pilastrata 1</span></div>
<div class="cell" style="left:69.30px;top:354.80px;width:14.40px;height:9.30px;line-height:10.20px;background:#fff;border-right:1px solid #ededf0;border-bottom:1px solid #ededf0;text-align:center;padding-left:0.0px;font-size:6.1px"><span style="display:inline-block;transform:scaleX(0.91);transform-origin:50% 50%">1</span></div>
<div class="cell" style="left:83.70px;top:354.80px;width:26.30px;height:9.30px;line-height:10.20px;background:#fff;border-right:1px solid #ededf0;border-bottom:1px solid #ededf0;text-align:center;padding-left:0.0px;font-size:6.1px"><span style="display:inline-block;transform:scaleX(0.91);transform-origin:50% 50%">C28/3</span></div>
<div class="cell" style="left:0.50px;top:364.10px;width:18.80px;height:9.30px;line-height:10.20px;background:#f4f4f6;border-right:1px solid #d6d6dc;border-bottom:1px solid #d6d6dc;text-align:center;padding-left:0.0px;font-size:6.1px"><span style="display:inline-block;transform:scaleX(0.91);transform-origin:50% 50%">R2</span></div>
<div class="cell" style="left:19.30px;top:364.10px;width:16.10px;height:9.30px;line-height:10.20px;background:#fff;border-right:1px solid #ededf0;border-bottom:1px solid #ededf0;text-align:center;padding-left:0.0px;font-size:6.1px"><span style="display:inline-block;transform:scaleX(0.91);transform-origin:50% 50%">2</span></div>
<div class="cell" style="left:35.40px;top:364.10px;width:33.90px;height:9.30px;line-height:10.20px;background:#fff;border-right:1px solid #ededf0;border-bottom:1px solid #ededf0;text-align:center;padding-left:0.0px;font-size:6.1px"><span style="display:inline-block;transform:scaleX(0.91);transform-origin:50% 50%">Pilastrata 2</span></div>
<div class="cell" style="left:69.30px;top:364.10px;width:14.40px;height:9.30px;line-height:10.20px;background:#fff;border-right:1px solid #ededf0;border-bottom:1px solid #ededf0;text-align:center;padding-left:0.0px;font-size:6.1px"><span style="display:inline-block;transform:scaleX(0.91);transform-origin:50% 50%">7</span></div>
<div class="cell" style="left:83.70px;top:364.10px;width:26.30px;height:9.30px;line-height:10.20px;background:#fff;border-right:1px solid #ededf0;border-bottom:1px solid #ededf0;text-align:center;padding-left:0.0px;font-size:6.1px"><span style="display:inline-block;transform:scaleX(0.91);transform-origin:50% 50%">C28/3</span></div>
<div class="cell" style="left:0.50px;top:373.40px;width:18.80px;height:9.30px;line-height:10.20px;background:#f4f4f6;border-right:1px solid #d6d6dc;border-bottom:1px solid #d6d6dc;text-align:center;padding-left:0.0px;font-size:6.1px"><span style="display:inline-block;transform:scaleX(0.91);transform-origin:50% 50%">R3</span></div>
<div class="cell" style="left:19.30px;top:373.40px;width:16.10px;height:9.30px;line-height:10.20px;background:#fff;border-right:1px solid #ededf0;border-bottom:1px solid #ededf0;text-align:center;padding-left:0.0px;font-size:6.1px"><span style="display:inline-block;transform:scaleX(0.91);transform-origin:50% 50%">3</span></div>
<div class="cell" style="left:35.40px;top:373.40px;width:33.90px;height:9.30px;line-height:10.20px;background:#fff;border-right:1px solid #ededf0;border-bottom:1px solid #ededf0;text-align:center;padding-left:0.0px;font-size:6.1px"><span style="display:inline-block;transform:scaleX(0.91);transform-origin:50% 50%">Pilastrata 3</span></div>
<div class="cell" style="left:69.30px;top:373.40px;width:14.40px;height:9.30px;line-height:10.20px;background:#fff;border-right:1px solid #ededf0;border-bottom:1px solid #ededf0;text-align:center;padding-left:0.0px;font-size:6.1px"><span style="display:inline-block;transform:scaleX(0.91);transform-origin:50% 50%">1</span></div>
<div class="cell" style="left:83.70px;top:373.40px;width:26.30px;height:9.30px;line-height:10.20px;background:#fff;border-right:1px solid #ededf0;border-bottom:1px solid #ededf0;text-align:center;padding-left:0.0px;font-size:6.1px"><span style="display:inline-block;transform:scaleX(0.91);transform-origin:50% 50%">C28/3</span></div>
<div class="cell" style="left:0.50px;top:382.70px;width:18.80px;height:9.30px;line-height:10.20px;background:#f4f4f6;border-right:1px solid #d6d6dc;border-bottom:1px solid #d6d6dc;text-align:center;padding-left:0.0px;font-size:6.1px"><span style="display:inline-block;transform:scaleX(0.91);transform-origin:50% 50%">R4</span></div>
<div class="cell" style="left:19.30px;top:382.70px;width:16.10px;height:9.30px;line-height:10.20px;background:#fff;border-right:1px solid #ededf0;border-bottom:1px solid #ededf0;text-align:center;padding-left:0.0px;font-size:6.1px"><span style="display:inline-block;transform:scaleX(0.91);transform-origin:50% 50%">4</span></div>
<div class="cell" style="left:35.40px;top:382.70px;width:33.90px;height:9.30px;line-height:10.20px;background:#fff;border-right:1px solid #ededf0;border-bottom:1px solid #ededf0;text-align:center;padding-left:0.0px;font-size:6.1px"><span style="display:inline-block;transform:scaleX(0.91);transform-origin:50% 50%">Travata 1</span></div>
<div class="cell" style="left:69.30px;top:382.70px;width:14.40px;height:9.30px;line-height:10.20px;background:#fff;border-right:1px solid #ededf0;border-bottom:1px solid #ededf0;text-align:center;padding-left:0.0px;font-size:6.1px"><span style="display:inline-block;transform:scaleX(0.91);transform-origin:50% 50%">2</span></div>
<div class="cell" style="left:83.70px;top:382.70px;width:26.30px;height:9.30px;line-height:10.20px;background:#fff;border-right:1px solid #ededf0;border-bottom:1px solid #ededf0;text-align:center;padding-left:0.0px;font-size:6.1px"><span style="display:inline-block;transform:scaleX(0.91);transform-origin:50% 50%">C28/3</span></div>
<div class="cell" style="left:0.50px;top:392.00px;width:18.80px;height:9.30px;line-height:10.20px;background:#f4f4f6;border-right:1px solid #d6d6dc;border-bottom:1px solid #d6d6dc;text-align:center;padding-left:0.0px;font-size:6.1px"><span style="display:inline-block;transform:scaleX(0.91);transform-origin:50% 50%">R5</span></div>
<div class="cell" style="left:19.30px;top:392.00px;width:16.10px;height:9.30px;line-height:10.20px;background:#fff;border-right:1px solid #ededf0;border-bottom:1px solid #ededf0;text-align:center;padding-left:0.0px;font-size:6.1px"><span style="display:inline-block;transform:scaleX(0.91);transform-origin:50% 50%">5</span></div>
<div class="cell" style="left:35.40px;top:392.00px;width:33.90px;height:9.30px;line-height:10.20px;background:#fff;border-right:1px solid #ededf0;border-bottom:1px solid #ededf0;text-align:center;padding-left:0.0px;font-size:6.1px"><span style="display:inline-block;transform:scaleX(0.91);transform-origin:50% 50%">Travata 1</span></div>
<div class="cell" style="left:69.30px;top:392.00px;width:14.40px;height:9.30px;line-height:10.20px;background:#fff;border-right:1px solid #ededf0;border-bottom:1px solid #ededf0;text-align:center;padding-left:0.0px;font-size:6.1px"><span style="display:inline-block;transform:scaleX(0.91);transform-origin:50% 50%">2</span></div>
<div class="cell" style="left:83.70px;top:392.00px;width:26.30px;height:9.30px;line-height:10.20px;background:#fff;border-right:1px solid #ededf0;border-bottom:1px solid #ededf0;text-align:center;padding-left:0.0px;font-size:6.1px"><span style="display:inline-block;transform:scaleX(0.91);transform-origin:50% 50%">C28/3</span></div>
<div class="abs" style="left:18.9px;top:354.30px;width:16.8px;height:10.20px;border:1px solid #111"></div>
<div class="abs" style="left:34.8px;top:363.20px;width:1.7px;height:1.7px;background:#111"></div>
<div class="abs" style="left:383.500px;top:355.500px;width:393px;height:40px;background:#fff"></div>
<div class="cell" style="left:305.00px;top:345.50px;width:27.80px;height:9.30px;line-height:10.20px;background:#f4f4f6;border-right:1px solid #d6d6dc;border-bottom:1px solid #d6d6dc;text-align:right;padding-left:0.0px;font-size:6.1px"><span style="display:inline-block;transform:scaleX(0.91);transform-origin:100% 50%">Mid</span></div>
<div class="cell" style="left:332.80px;top:345.50px;width:18.20px;height:9.30px;line-height:10.20px;background:#f4f4f6;border-right:1px solid #d6d6dc;border-bottom:1px solid #d6d6dc;text-align:center;padding-left:0.0px;font-size:6.1px"><span style="display:inline-block;transform:scaleX(0.91);transform-origin:50% 50%">Beta1</span></div>
<div class="cell" style="left:351.00px;top:345.50px;width:17.00px;height:9.30px;line-height:10.20px;background:#f4f4f6;border-right:1px solid #d6d6dc;border-bottom:1px solid #d6d6dc;text-align:center;padding-left:0.0px;font-size:6.1px"><span style="display:inline-block;transform:scaleX(0.91);transform-origin:50% 50%">Beta2</span></div>
<div class="cell" style="left:368.00px;top:345.50px;width:98.00px;height:9.30px;line-height:10.20px;background:#f4f4f6;border-right:1px solid #d6d6dc;border-bottom:1px solid #d6d6dc;text-align:center;padding-left:0.0px;font-size:6.1px"><span style="display:inline-block;transform:scaleX(0.91);transform-origin:50% 50%">Stato</span></div>
<div class="cell" style="left:305.00px;top:354.80px;width:27.80px;height:9.30px;line-height:10.20px;background:#fff;border-right:1px solid #ededf0;border-bottom:1px solid #ededf0;text-align:right;padding-left:0.0px;font-size:6.1px"><span style="display:inline-block;transform:scaleX(0.91);transform-origin:100% 50%">ttivo</span></div>
<div class="cell" style="left:332.80px;top:354.80px;width:18.20px;height:9.30px;line-height:10.20px;background:#fff;border-right:1px solid #ededf0;border-bottom:1px solid #ededf0;text-align:center;padding-left:0.0px;font-size:6.1px"><span style="display:inline-block;transform:scaleX(0.91);transform-origin:50% 50%">1.00</span></div>
<div class="cell" style="left:351.00px;top:354.80px;width:17.00px;height:9.30px;line-height:10.20px;background:#fff;border-right:1px solid #ededf0;border-bottom:1px solid #ededf0;text-align:center;padding-left:0.0px;font-size:6.1px"><span style="display:inline-block;transform:scaleX(0.91);transform-origin:50% 50%">1.00</span></div>
<div class="cell" style="left:368.00px;top:354.80px;width:98.00px;height:9.30px;line-height:10.20px;background:#fff;border-right:1px solid #ededf0;border-bottom:1px solid #ededf0;text-align:left;padding-left:1.5px;font-size:6.1px"><span style="display:inline-block;transform:scaleX(0.91);transform-origin:0 50%">Da verificare</span></div>
<div class="cell" style="left:305.00px;top:364.10px;width:27.80px;height:9.30px;line-height:10.20px;background:#fff;border-right:1px solid #ededf0;border-bottom:1px solid #ededf0;text-align:right;padding-left:0.0px;font-size:6.1px"><span style="display:inline-block;transform:scaleX(0.91);transform-origin:100% 50%">ttivo</span></div>
<div class="cell" style="left:332.80px;top:364.10px;width:18.20px;height:9.30px;line-height:10.20px;background:#fff;border-right:1px solid #ededf0;border-bottom:1px solid #ededf0;text-align:center;padding-left:0.0px;font-size:6.1px"><span style="display:inline-block;transform:scaleX(0.91);transform-origin:50% 50%">1.00</span></div>
<div class="cell" style="left:351.00px;top:364.10px;width:17.00px;height:9.30px;line-height:10.20px;background:#fff;border-right:1px solid #ededf0;border-bottom:1px solid #ededf0;text-align:center;padding-left:0.0px;font-size:6.1px"><span style="display:inline-block;transform:scaleX(0.91);transform-origin:50% 50%">1.00</span></div>
<div class="cell" style="left:368.00px;top:364.10px;width:98.00px;height:9.30px;line-height:10.20px;background:#fff;border-right:1px solid #ededf0;border-bottom:1px solid #ededf0;text-align:left;padding-left:1.5px;font-size:6.1px"><span style="display:inline-block;transform:scaleX(0.91);transform-origin:0 50%">Da verificare</span></div>
<div class="cell" style="left:305.00px;top:373.40px;width:27.80px;height:9.30px;line-height:10.20px;background:#fff;border-right:1px solid #ededf0;border-bottom:1px solid #ededf0;text-align:right;padding-left:0.0px;font-size:6.1px"><span style="display:inline-block;transform:scaleX(0.91);transform-origin:100% 50%">ttivo</span></div>
<div class="cell" style="left:332.80px;top:373.40px;width:18.20px;height:9.30px;line-height:10.20px;background:#fff;border-right:1px solid #ededf0;border-bottom:1px solid #ededf0;text-align:center;padding-left:0.0px;font-size:6.1px"><span style="display:inline-block;transform:scaleX(0.91);transform-origin:50% 50%">1.00</span></div>
<div class="cell" style="left:351.00px;top:373.40px;width:17.00px;height:9.30px;line-height:10.20px;background:#fff;border-right:1px solid #ededf0;border-bottom:1px solid #ededf0;text-align:center;padding-left:0.0px;font-size:6.1px"><span style="display:inline-block;transform:scaleX(0.91);transform-origin:50% 50%">1.00</span></div>
<div class="cell" style="left:368.00px;top:373.40px;width:98.00px;height:9.30px;line-height:10.20px;background:#fff;border-right:1px solid #ededf0;border-bottom:1px solid #ededf0;text-align:left;padding-left:1.5px;font-size:6.1px"><span style="display:inline-block;transform:scaleX(0.91);transform-origin:0 50%">Da verificare</span></div>
<div class="cell" style="left:305.00px;top:382.70px;width:27.80px;height:9.30px;line-height:10.20px;background:#fff;border-right:1px solid #ededf0;border-bottom:1px solid #ededf0;text-align:right;padding-left:0.0px;font-size:6.1px"><span style="display:inline-block;transform:scaleX(0.91);transform-origin:100% 50%">ttivo</span></div>
<div class="cell" style="left:332.80px;top:382.70px;width:18.20px;height:9.30px;line-height:10.20px;background:#fff;border-right:1px solid #ededf0;border-bottom:1px solid #ededf0;text-align:center;padding-left:0.0px;font-size:6.1px"><span style="display:inline-block;transform:scaleX(0.91);transform-origin:50% 50%">0.82</span></div>
<div class="cell" style="left:351.00px;top:382.70px;width:17.00px;height:9.30px;line-height:10.20px;background:#fff;border-right:1px solid #ededf0;border-bottom:1px solid #ededf0;text-align:center;padding-left:0.0px;font-size:6.1px"><span style="display:inline-block;transform:scaleX(0.91);transform-origin:50% 50%">0.82</span></div>
<div class="cell" style="left:368.00px;top:382.70px;width:98.00px;height:9.30px;line-height:10.20px;background:#fff;border-right:1px solid #ededf0;border-bottom:1px solid #ededf0;text-align:left;padding-left:1.5px;font-size:6.1px"><span style="display:inline-block;transform:scaleX(0.91);transform-origin:0 50%">Da verificare</span></div>
<div class="cell" style="left:305.00px;top:392.00px;width:27.80px;height:9.30px;line-height:10.20px;background:#fff;border-right:1px solid #ededf0;border-bottom:1px solid #ededf0;text-align:right;padding-left:0.0px;font-size:6.1px"><span style="display:inline-block;transform:scaleX(0.91);transform-origin:100% 50%">ttivo</span></div>
<div class="cell" style="left:332.80px;top:392.00px;width:18.20px;height:9.30px;line-height:10.20px;background:#fff;border-right:1px solid #ededf0;border-bottom:1px solid #ededf0;text-align:center;padding-left:0.0px;font-size:6.1px"><span style="display:inline-block;transform:scaleX(0.91);transform-origin:50% 50%">0.45</span></div>
<div class="cell" style="left:351.00px;top:392.00px;width:17.00px;height:9.30px;line-height:10.20px;background:#fff;border-right:1px solid #ededf0;border-bottom:1px solid #ededf0;text-align:center;padding-left:0.0px;font-size:6.1px"><span style="display:inline-block;transform:scaleX(0.91);transform-origin:50% 50%">0.45</span></div>
<div class="cell" style="left:368.00px;top:392.00px;width:98.00px;height:9.30px;line-height:10.20px;background:#fff;border-right:1px solid #ededf0;border-bottom:1px solid #ededf0;text-align:left;padding-left:1.5px;font-size:6.1px"><span style="display:inline-block;transform:scaleX(0.91);transform-origin:0 50%">Da verificare</span></div>
<div class="abs" style="left:778.3px;top:346px;width:7.2px;height:50px;background:#f0f0f0"></div>
<div class="abs" style="left:778.8px;top:355.6px;width:6.4px;height:8.4px;background:#cdcdcd"></div>
<svg class="abs" style="left:778px;top:346px" width="8" height="50" viewBox="0 0 8 50"><path d="M2.200 5.800L4 4l1.800 1.800M2.200 44.400L4 46.200l1.800-1.800" fill="none" stroke="#555" stroke-width="0.700"/></svg>
<div class="abs" style="left:0;top:396.300px;width:800px;height:22px;background:#efeff2"></div>
<div class="abs" style="left:0;top:396px;width:786px;height:1px;background:#9c9ca4"></div>
<svg class="abs" style="left:0;top:396px" width="100" height="10" viewBox="0 0 100 10"><path d="M32.200 0h57l-3.700 8.300h-50.300z" fill="#fff"/><path d="M32.200 0.300l3 8h50.300l3.700-8" fill="none" stroke="#333" stroke-width="0.700"/><g fill="#8a8a90" stroke="#8a8a90" stroke-width="0.400"><path d="M2.600 2.600v3.600M5.700 2.600L3.500 4.400l2.200 1.800z"/><path d="M12.800 2.600l-2.200 1.800 2.200 1.800z"/><path d="M18.300 2.600l2.200 1.800-2.200 1.800z"/><path d="M24.800 2.600l2.200 1.800-2.200 1.800zM28.200 2.600v3.600"/></g></svg>
<div class="t" style="left:36.3px;top:397.1px;font-size:6.2px;color:#111;font-weight:bold;transform-origin:0 0;transform:scaleX(0.952);">NTC18C-Modello</div>
<svg class="abs" style="left:400px;top:397px" width="380" height="8" viewBox="0 0 380 8"><path d="M2 0.800v6" stroke="#888" stroke-width="0.800" stroke-dasharray="1 1"/><path d="M8.600 1.900v3.600l-2.300-1.800z" fill="#444"/><rect x="12.300" y="1.500" width="8.300" height="4.300" fill="#c6c6d4"/><path d="M373.300 1.900v3.600l2.300-1.800z" fill="#444"/></svg>
<div class="grip" style="left:1px;top:407px;height:9px"></div>
<svg class="abs" style="left:0;top:404px" width="60" height="14" viewBox="0 0 60 14"><g fill="none" stroke="#9a9aa2" stroke-width="0.700"><rect x="6.400" y="4.600" width="4" height="4.200" fill="#e4e4ea"/><circle cx="10.400" cy="9" r="1.900" stroke="#6a6a72" fill="#f4f4f8"/><path d="M11.800 10.400l1.700 1.600" stroke="#6a6a72" stroke-width="1"/><path d="M18 3v9.500" stroke="#dcdce2"/><path d="M23.500 6l3.500 3M27 6l-3.500 3M22.800 10.400h5.800" stroke="#9a9aa2"/><rect x="32.700" y="2.400" width="10.800" height="10.400" stroke="#d0d0d8" fill="#f2f2f6"/><path d="M35.700 5.600l3.800 3.200M39.500 5.600l-3.800 3.200M34.800 10.400h6.400" stroke="#9a9aa2"/></g></svg>
<div class="t" style="left:50.7px;top:408.8px;font-size:6.0px;color:#8a8a92;transform-origin:0 0;transform:scaleX(0.927);">1575.00</div>
<div class="grip" style="left:111px;top:407px;height:9px"></div>
<div class="abs" style="left:114.600px;top:406.400px;width:12px;height:11px;border:1px solid #c4c4cc;background:#f2f2f6"></div>
<div class="t" style="left:116.3px;top:410.5px;font-size:4.2px;color:#8a8a92;transform-origin:0 0;transform:scaleX(1.096);">Max</div>
<div class="t" style="left:128.2px;top:410.5px;font-size:4.2px;color:#8a8a92;transform-origin:0 0;transform:scaleX(1.182);">Min</div>
<div class="abs" style="left:139.500px;top:404px;width:1px;height:11px;background:#d4d4dc"></div>
<div class="t" style="left:144.0px;top:409.8px;font-size:6.0px;color:#b4b4bc;transform-origin:0 0;transform:scaleX(0.886);">VII</div>
<div class="t" style="left:155.0px;top:409.8px;font-size:6.0px;color:#b4b4bc;transform-origin:0 0;transform:scaleX(0.900);">M1</div>
<div class="t" style="left:167.0px;top:409.8px;font-size:6.0px;color:#b4b4bc;transform-origin:0 0;transform:scaleX(0.899);">V2</div>
<div class="t" style="left:179.0px;top:409.8px;font-size:6.0px;color:#b4b4bc;transform-origin:0 0;transform:scaleX(0.900);">M2</div>
<div class="t" style="left:191.0px;top:409.8px;font-size:6.0px;color:#b4b4bc;transform-origin:0 0;transform:scaleX(0.861);">AF</div>
<div class="t" style="left:202.0px;top:409.8px;font-size:6.0px;color:#b4b4bc;transform-origin:0 0;transform:scaleX(0.877);">MT</div>
<div class="dd" style="left:213.500px;top:414px;transform:scale(.6)"></div>
<div class="abs" style="left:100.8px;top:98.0px;width:221.6px;height:298.3px;background:#f0f0f0;border:1px solid #7fa3d0;box-shadow:0 1px 3.5px rgba(0,0,0,.3)"></div>
<div class="abs" style="left:101.8px;top:99.0px;width:219.6px;height:15.2px;background:#fff"></div>
<div class="t" style="left:105.0px;top:102.7px;font-size:7.0px;color:#000;transform-origin:0 0;transform:scaleX(0.903);">Combinazioni di carico</div>
<svg class="abs" style="left:308px;top:101px" width="10" height="10" viewBox="0 0 10 10"><path d="M2.500 2.500l5 5M7.500 2.500l-5 5" stroke="#333" stroke-width="0.700"/></svg>
<div class="abs" style="left:104.600px;top:127.500px;width:212.600px;height:248.800px;background:#fff;border:1px solid #d9d9d9"></div>
<div class="abs" style="left:104.600px;top:117.500px;width:66px;height:10.800px;background:#fff;border:1px solid #d9d9d9;border-bottom:none"></div>
<div class="t" style="left:107.8px;top:119.1px;font-size:6.2px;color:#000;transform-origin:0 0;transform:scaleX(0.895);">Combinazione di carichi</div>
<div class="abs" style="left:111.5px;top:133.4px;width:199.5px;height:223.2px;background:#fff;border:1px solid #828790;border-right-color:#e3e3e3;border-bottom-color:#e3e3e3"></div>
<div class="cell" style="left:112.50px;top:134.20px;width:61.00px;height:9.00px;line-height:9.80px;background:#f0f0f0;border-right:1px solid #bcbcbc;border-bottom:1px solid #bcbcbc;font-size:6.1px"><span style="display:inline-block;transform:scaleX(.91)">Load Case</span></div>
<div class="cell" style="left:173.50px;top:134.20px;width:17.20px;height:9.00px;line-height:9.80px;background:#f0f0f0;border-right:1px solid #bcbcbc;border-bottom:1px solid #bcbcbc;font-size:6.1px"><span style="display:inline-block;transform:scaleX(.91)">Attivo</span></div>
<div class="cell" style="left:190.70px;top:134.20px;width:41.80px;height:9.00px;line-height:9.80px;background:#f0f0f0;border-right:1px solid #bcbcbc;border-bottom:1px solid #bcbcbc;font-size:6.1px"><span style="display:inline-block;transform:scaleX(.91)">Combinazioni</span></div>
<div class="cell" style="left:232.50px;top:134.20px;width:30.70px;height:9.00px;line-height:9.80px;background:#f0f0f0;border-right:1px solid #bcbcbc;border-bottom:1px solid #bcbcbc;font-size:6.1px"><span style="display:inline-block;transform:scaleX(.91)">Dir.Sismica</span></div>
<div class="cell" style="left:112.50px;top:143.20px;width:61.00px;height:9.17px;line-height:9.97px;background:#fff;border-right:1px solid #ececec;border-bottom:1px solid #ececec;font-size:6.1px"><span style="display:inline-block;transform:scaleX(.91)">1: pp</span></div>
<div class="cell" style="left:173.50px;top:143.20px;width:17.20px;height:9.17px;line-height:9.97px;background:#fff;border-right:1px solid #ececec;border-bottom:1px solid #ececec;font-size:6.1px"><span style="display:inline-block;transform:scaleX(.91)"></span></div>
<div class="cell" style="left:190.70px;top:143.20px;width:41.80px;height:9.17px;line-height:9.97px;background:#fff;border-right:1px solid #ececec;border-bottom:1px solid #ececec;font-size:6.1px"><span style="display:inline-block;transform:scaleX(.91)">-----</span></div>
<div class="cell" style="left:232.50px;top:143.20px;width:30.70px;height:9.17px;line-height:9.97px;background:#fff;border-right:1px solid #ececec;border-bottom:1px solid #ececec;font-size:6.1px"><span style="display:inline-block;transform:scaleX(.91)">[---]</span></div>
<svg class="abs" style="left:179.20px;top:144.70px" width="6.800" height="6.600" viewBox="0 0 6.800 6.600"><rect x="0.400" y="0.400" width="6" height="5.800" fill="#fff" stroke="#3a3a3a" stroke-width="0.750"/><path d="M0.800 0.800l5.200 5M6 0.800L0.800 5.800" stroke="#3a3a3a" stroke-width="0.600"/></svg>
<div class="cell" style="left:112.50px;top:152.37px;width:61.00px;height:9.17px;line-height:9.97px;background:#fff;border-right:1px solid #ececec;border-bottom:1px solid #ececec;font-size:6.1px"><span style="display:inline-block;transform:scaleX(.91)">2: perm</span></div>
<div class="cell" style="left:173.50px;top:152.37px;width:17.20px;height:9.17px;line-height:9.97px;background:#fff;border-right:1px solid #ececec;border-bottom:1px solid #ececec;font-size:6.1px"><span style="display:inline-block;transform:scaleX(.91)"></span></div>
<div class="cell" style="left:190.70px;top:152.37px;width:41.80px;height:9.17px;line-height:9.97px;background:#fff;border-right:1px solid #ececec;border-bottom:1px solid #ececec;font-size:6.1px"><span style="display:inline-block;transform:scaleX(.91)">-----</span></div>
<div class="cell" style="left:232.50px;top:152.37px;width:30.70px;height:9.17px;line-height:9.97px;background:#fff;border-right:1px solid #ececec;border-bottom:1px solid #ececec;font-size:6.1px"><span style="display:inline-block;transform:scaleX(.91)">[---]</span></div>
<svg class="abs" style="left:179.20px;top:153.87px" width="6.800" height="6.600" viewBox="0 0 6.800 6.600"><rect x="0.400" y="0.400" width="6" height="5.800" fill="#fff" stroke="#3a3a3a" stroke-width="0.750"/><path d="M0.800 0.800l5.200 5M6 0.800L0.800 5.800" stroke="#3a3a3a" stroke-width="0.600"/></svg>
<div class="cell" style="left:112.50px;top:161.54px;width:61.00px;height:9.17px;line-height:9.97px;background:#fff;border-right:1px solid #ececec;border-bottom:1px solid #ececec;font-size:6.1px"><span style="display:inline-block;transform:scaleX(.91)">3: acc1</span></div>
<div class="cell" style="left:173.50px;top:161.54px;width:17.20px;height:9.17px;line-height:9.97px;background:#fff;border-right:1px solid #ececec;border-bottom:1px solid #ececec;font-size:6.1px"><span style="display:inline-block;transform:scaleX(.91)"></span></div>
<div class="cell" style="left:190.70px;top:161.54px;width:41.80px;height:9.17px;line-height:9.97px;background:#fff;border-right:1px solid #ececec;border-bottom:1px solid #ececec;font-size:6.1px"><span style="display:inline-block;transform:scaleX(.91)">-----</span></div>
<div class="cell" style="left:232.50px;top:161.54px;width:30.70px;height:9.17px;line-height:9.97px;background:#fff;border-right:1px solid #ececec;border-bottom:1px solid #ececec;font-size:6.1px"><span style="display:inline-block;transform:scaleX(.91)">[---]</span></div>
<svg class="abs" style="left:179.20px;top:163.04px" width="6.800" height="6.600" viewBox="0 0 6.800 6.600"><rect x="0.400" y="0.400" width="6" height="5.800" fill="#fff" stroke="#3a3a3a" stroke-width="0.750"/><path d="M0.800 0.800l5.200 5M6 0.800L0.800 5.800" stroke="#3a3a3a" stroke-width="0.600"/></svg>
<div class="cell" style="left:112.50px;top:170.71px;width:61.00px;height:9.17px;line-height:9.97px;background:#fff;border-right:1px solid #ececec;border-bottom:1px solid #ececec;font-size:6.1px"><span style="display:inline-block;transform:scaleX(.91)">4: acc2</span></div>
<div class="cell" style="left:173.50px;top:170.71px;width:17.20px;height:9.17px;line-height:9.97px;background:#fff;border-right:1px solid #ececec;border-bottom:1px solid #ececec;font-size:6.1px"><span style="display:inline-block;transform:scaleX(.91)"></span></div>
<div class="cell" style="left:190.70px;top:170.71px;width:41.80px;height:9.17px;line-height:9.97px;background:#fff;border-right:1px solid #ececec;border-bottom:1px solid #ececec;font-size:6.1px"><span style="display:inline-block;transform:scaleX(.91)">-----</span></div>
<div class="cell" style="left:232.50px;top:170.71px;width:30.70px;height:9.17px;line-height:9.97px;background:#fff;border-right:1px solid #ececec;border-bottom:1px solid #ececec;font-size:6.1px"><span style="display:inline-block;transform:scaleX(.91)">[---]</span></div>
<svg class="abs" style="left:179.20px;top:172.21px" width="6.800" height="6.600" viewBox="0 0 6.800 6.600"><rect x="0.400" y="0.400" width="6" height="5.800" fill="#fff" stroke="#3a3a3a" stroke-width="0.750"/><path d="M0.800 0.800l5.200 5M6 0.800L0.800 5.800" stroke="#3a3a3a" stroke-width="0.600"/></svg>
<div class="cell" style="left:112.50px;top:179.88px;width:61.00px;height:9.17px;line-height:9.97px;background:#fff;border-right:1px solid #ececec;border-bottom:1px solid #ececec;font-size:6.1px"><span style="display:inline-block;transform:scaleX(.91)">5: ecc. accidentale SLV</span></div>
<div class="cell" style="left:173.50px;top:179.88px;width:17.20px;height:9.17px;line-height:9.97px;background:#fff;border-right:1px solid #ececec;border-bottom:1px solid #ececec;font-size:6.1px"><span style="display:inline-block;transform:scaleX(.91)"></span></div>
<div class="cell" style="left:190.70px;top:179.88px;width:41.80px;height:9.17px;line-height:9.97px;background:#fff;border-right:1px solid #ececec;border-bottom:1px solid #ececec;font-size:6.1px"><span style="display:inline-block;transform:scaleX(.91)">-----</span></div>
<div class="cell" style="left:232.50px;top:179.88px;width:30.70px;height:9.17px;line-height:9.97px;background:#fff;border-right:1px solid #ececec;border-bottom:1px solid #ececec;font-size:6.1px"><span style="display:inline-block;transform:scaleX(.91)">[---]</span></div>
<svg class="abs" style="left:179.20px;top:181.38px" width="6.800" height="6.600" viewBox="0 0 6.800 6.600"><rect x="0.400" y="0.400" width="6" height="5.800" fill="#fff" stroke="#3a3a3a" stroke-width="0.750"/><path d="M0.800 0.800l5.200 5M6 0.800L0.800 5.800" stroke="#3a3a3a" stroke-width="0.600"/></svg>
<div class="cell" style="left:112.50px;top:189.05px;width:61.00px;height:9.17px;line-height:9.97px;background:#fff;border-right:1px solid #ececec;border-bottom:1px solid #ececec;font-size:6.1px"><span style="display:inline-block;transform:scaleX(.91)">1: SLU 1</span></div>
<div class="cell" style="left:173.50px;top:189.05px;width:17.20px;height:9.17px;line-height:9.97px;background:#fff;border-right:1px solid #ececec;border-bottom:1px solid #ececec;font-size:6.1px"><span style="display:inline-block;transform:scaleX(.91)"></span></div>
<div class="cell" style="left:190.70px;top:189.05px;width:41.80px;height:9.17px;line-height:9.97px;background:#fff;border-right:1px solid #ececec;border-bottom:1px solid #ececec;font-size:6.1px"><span style="display:inline-block;transform:scaleX(.91)">SLU</span></div>
<div class="cell" style="left:232.50px;top:189.05px;width:30.70px;height:9.17px;line-height:9.97px;background:#fff;border-right:1px solid #ececec;border-bottom:1px solid #ececec;font-size:6.1px"><span style="display:inline-block;transform:scaleX(.91)">[---]</span></div>
<svg class="abs" style="left:179.20px;top:190.55px" width="6.800" height="6.600" viewBox="0 0 6.800 6.600"><rect x="0.400" y="0.400" width="6" height="5.800" fill="#fff" stroke="#3a3a3a" stroke-width="0.750"/><path d="M0.800 0.800l5.200 5M6 0.800L0.800 5.800" stroke="#3a3a3a" stroke-width="0.600"/></svg>
<div class="cell" style="left:112.50px;top:198.22px;width:61.00px;height:9.17px;line-height:9.97px;background:#fff;border-right:1px solid #ececec;border-bottom:1px solid #ececec;font-size:6.1px"><span style="display:inline-block;transform:scaleX(.91)">2: SLU 2</span></div>
<div class="cell" style="left:173.50px;top:198.22px;width:17.20px;height:9.17px;line-height:9.97px;background:#fff;border-right:1px solid #ececec;border-bottom:1px solid #ececec;font-size:6.1px"><span style="display:inline-block;transform:scaleX(.91)"></span></div>
<div class="cell" style="left:190.70px;top:198.22px;width:41.80px;height:9.17px;line-height:9.97px;background:#fff;border-right:1px solid #ececec;border-bottom:1px solid #ececec;font-size:6.1px"><span style="display:inline-block;transform:scaleX(.91)">SLU</span></div>
<div class="cell" style="left:232.50px;top:198.22px;width:30.70px;height:9.17px;line-height:9.97px;background:#fff;border-right:1px solid #ececec;border-bottom:1px solid #ececec;font-size:6.1px"><span style="display:inline-block;transform:scaleX(.91)">[---]</span></div>
<svg class="abs" style="left:179.20px;top:199.72px" width="6.800" height="6.600" viewBox="0 0 6.800 6.600"><rect x="0.400" y="0.400" width="6" height="5.800" fill="#fff" stroke="#3a3a3a" stroke-width="0.750"/><path d="M0.800 0.800l5.200 5M6 0.800L0.800 5.800" stroke="#3a3a3a" stroke-width="0.600"/></svg>
<div class="cell" style="left:112.50px;top:207.39px;width:61.00px;height:9.17px;line-height:9.97px;background:#fff;border-right:1px solid #ececec;border-bottom:1px solid #ececec;font-size:6.1px"><span style="display:inline-block;transform:scaleX(.91)">3: SLU 3</span></div>
<div class="cell" style="left:173.50px;top:207.39px;width:17.20px;height:9.17px;line-height:9.97px;background:#fff;border-right:1px solid #ececec;border-bottom:1px solid #ececec;font-size:6.1px"><span style="display:inline-block;transform:scaleX(.91)"></span></div>
<div class="cell" style="left:190.70px;top:207.39px;width:41.80px;height:9.17px;line-height:9.97px;background:#fff;border-right:1px solid #ececec;border-bottom:1px solid #ececec;font-size:6.1px"><span style="display:inline-block;transform:scaleX(.91)">SLU</span></div>
<div class="cell" style="left:232.50px;top:207.39px;width:30.70px;height:9.17px;line-height:9.97px;background:#fff;border-right:1px solid #ececec;border-bottom:1px solid #ececec;font-size:6.1px"><span style="display:inline-block;transform:scaleX(.91)">[---]</span></div>
<svg class="abs" style="left:179.20px;top:208.89px" width="6.800" height="6.600" viewBox="0 0 6.800 6.600"><rect x="0.400" y="0.400" width="6" height="5.800" fill="#fff" stroke="#3a3a3a" stroke-width="0.750"/><path d="M0.800 0.800l5.200 5M6 0.800L0.800 5.800" stroke="#3a3a3a" stroke-width="0.600"/></svg>
<div class="cell" style="left:112.50px;top:216.56px;width:61.00px;height:9.17px;line-height:9.97px;background:#fff;border-right:1px solid #ececec;border-bottom:1px solid #ececec;font-size:6.1px"><span style="display:inline-block;transform:scaleX(.91)">4: SLV (X+0.3Y+ecc)</span></div>
<div class="cell" style="left:173.50px;top:216.56px;width:17.20px;height:9.17px;line-height:9.97px;background:#fff;border-right:1px solid #ececec;border-bottom:1px solid #ececec;font-size:6.1px"><span style="display:inline-block;transform:scaleX(.91)"></span></div>
<div class="cell" style="left:190.70px;top:216.56px;width:41.80px;height:9.17px;line-height:9.97px;background:#fff;border-right:1px solid #ececec;border-bottom:1px solid #ececec;font-size:6.1px"><span style="display:inline-block;transform:scaleX(.91)">SLV-Sismico</span></div>
<div class="cell" style="left:232.50px;top:216.56px;width:30.70px;height:9.17px;line-height:9.97px;background:#fff;border-right:1px solid #ececec;border-bottom:1px solid #ececec;font-size:6.1px"><span style="display:inline-block;transform:scaleX(.91)">Dir +X</span></div>
<svg class="abs" style="left:179.20px;top:218.06px" width="6.800" height="6.600" viewBox="0 0 6.800 6.600"><rect x="0.400" y="0.400" width="6" height="5.800" fill="#fff" stroke="#3a3a3a" stroke-width="0.750"/><path d="M0.800 0.800l5.200 5M6 0.800L0.800 5.800" stroke="#3a3a3a" stroke-width="0.600"/></svg>
<div class="cell" style="left:112.50px;top:225.73px;width:61.00px;height:9.17px;line-height:9.97px;background:#fff;border-right:1px solid #ececec;border-bottom:1px solid #ececec;font-size:6.1px"><span style="display:inline-block;transform:scaleX(.91)">5: SLV (X+0.3Y-ecc)</span></div>
<div class="cell" style="left:173.50px;top:225.73px;width:17.20px;height:9.17px;line-height:9.97px;background:#fff;border-right:1px solid #ececec;border-bottom:1px solid #ececec;font-size:6.1px"><span style="display:inline-block;transform:scaleX(.91)"></span></div>
<div class="cell" style="left:190.70px;top:225.73px;width:41.80px;height:9.17px;line-height:9.97px;background:#fff;border-right:1px solid #ececec;border-bottom:1px solid #ececec;font-size:6.1px"><span style="display:inline-block;transform:scaleX(.91)">SLV-Sismico</span></div>
<div class="cell" style="left:232.50px;top:225.73px;width:30.70px;height:9.17px;line-height:9.97px;background:#fff;border-right:1px solid #ececec;border-bottom:1px solid #ececec;font-size:6.1px"><span style="display:inline-block;transform:scaleX(.91)">Dir +X</span></div>
<svg class="abs" style="left:179.20px;top:227.23px" width="6.800" height="6.600" viewBox="0 0 6.800 6.600"><rect x="0.400" y="0.400" width="6" height="5.800" fill="#fff" stroke="#3a3a3a" stroke-width="0.750"/><path d="M0.800 0.800l5.200 5M6 0.800L0.800 5.800" stroke="#3a3a3a" stroke-width="0.600"/></svg>
<div class="cell" style="left:112.50px;top:234.90px;width:61.00px;height:9.17px;line-height:9.97px;background:#fff;border-right:1px solid #ececec;border-bottom:1px solid #ececec;font-size:6.1px"><span style="display:inline-block;transform:scaleX(.91)">6: SLV (-X-0.3Y+ecc)</span></div>
<div class="cell" style="left:173.50px;top:234.90px;width:17.20px;height:9.17px;line-height:9.97px;background:#fff;border-right:1px solid #ececec;border-bottom:1px solid #ececec;font-size:6.1px"><span style="display:inline-block;transform:scaleX(.91)"></span></div>
<div class="cell" style="left:190.70px;top:234.90px;width:41.80px;height:9.17px;line-height:9.97px;background:#fff;border-right:1px solid #ececec;border-bottom:1px solid #ececec;font-size:6.1px"><span style="display:inline-block;transform:scaleX(.91)">SLV-Sismico</span></div>
<div class="cell" style="left:232.50px;top:234.90px;width:30.70px;height:9.17px;line-height:9.97px;background:#fff;border-right:1px solid #ececec;border-bottom:1px solid #ececec;font-size:6.1px"><span style="display:inline-block;transform:scaleX(.91)">Dir -X</span></div>
<svg class="abs" style="left:179.20px;top:236.40px" width="6.800" height="6.600" viewBox="0 0 6.800 6.600"><rect x="0.400" y="0.400" width="6" height="5.800" fill="#fff" stroke="#3a3a3a" stroke-width="0.750"/><path d="M0.800 0.800l5.200 5M6 0.800L0.800 5.800" stroke="#3a3a3a" stroke-width="0.600"/></svg>
<div class="cell" style="left:112.50px;top:244.07px;width:61.00px;height:9.17px;line-height:9.97px;background:#fff;border-right:1px solid #ececec;border-bottom:1px solid #ececec;font-size:6.1px"><span style="display:inline-block;transform:scaleX(.91)">7: SLV (-X-0.3Y-ecc)</span></div>
<div class="cell" style="left:173.50px;top:244.07px;width:17.20px;height:9.17px;line-height:9.97px;background:#fff;border-right:1px solid #ececec;border-bottom:1px solid #ececec;font-size:6.1px"><span style="display:inline-block;transform:scaleX(.91)"></span></div>
<div class="cell" style="left:190.70px;top:244.07px;width:41.80px;height:9.17px;line-height:9.97px;background:#fff;border-right:1px solid #ececec;border-bottom:1px solid #ececec;font-size:6.1px"><span style="display:inline-block;transform:scaleX(.91)">SLV-Sismico</span></div>
<div class="cell" style="left:232.50px;top:244.07px;width:30.70px;height:9.17px;line-height:9.97px;background:#fff;border-right:1px solid #ececec;border-bottom:1px solid #ececec;font-size:6.1px"><span style="display:inline-block;transform:scaleX(.91)">Dir -X</span></div>
<svg class="abs" style="left:179.20px;top:245.57px" width="6.800" height="6.600" viewBox="0 0 6.800 6.600"><rect x="0.400" y="0.400" width="6" height="5.800" fill="#fff" stroke="#3a3a3a" stroke-width="0.750"/><path d="M0.800 0.800l5.200 5M6 0.800L0.800 5.800" stroke="#3a3a3a" stroke-width="0.600"/></svg>
<div class="cell" style="left:112.50px;top:253.24px;width:61.00px;height:9.17px;line-height:9.97px;background:#fff;border-right:1px solid #ececec;border-bottom:1px solid #ececec;font-size:6.1px"><span style="display:inline-block;transform:scaleX(.91)">8: SLV (0.3X+Y+ecc)</span></div>
<div class="cell" style="left:173.50px;top:253.24px;width:17.20px;height:9.17px;line-height:9.97px;background:#fff;border-right:1px solid #ececec;border-bottom:1px solid #ececec;font-size:6.1px"><span style="display:inline-block;transform:scaleX(.91)"></span></div>
<div class="cell" style="left:190.70px;top:253.24px;width:41.80px;height:9.17px;line-height:9.97px;background:#fff;border-right:1px solid #ececec;border-bottom:1px solid #ececec;font-size:6.1px"><span style="display:inline-block;transform:scaleX(.91)">SLV-Sismico</span></div>
<div class="cell" style="left:232.50px;top:253.24px;width:30.70px;height:9.17px;line-height:9.97px;background:#fff;border-right:1px solid #ececec;border-bottom:1px solid #ececec;font-size:6.1px"><span style="display:inline-block;transform:scaleX(.91)">Dir +Y</span></div>
<svg class="abs" style="left:179.20px;top:254.74px" width="6.800" height="6.600" viewBox="0 0 6.800 6.600"><rect x="0.400" y="0.400" width="6" height="5.800" fill="#fff" stroke="#3a3a3a" stroke-width="0.750"/><path d="M0.800 0.800l5.200 5M6 0.800L0.800 5.800" stroke="#3a3a3a" stroke-width="0.600"/></svg>
<div class="cell" style="left:112.50px;top:262.41px;width:61.00px;height:9.17px;line-height:9.97px;background:#fff;border-right:1px solid #ececec;border-bottom:1px solid #ececec;font-size:6.1px"><span style="display:inline-block;transform:scaleX(.91)">9: SLV (0.3X+Y-ecc)</span></div>
<div class="cell" style="left:173.50px;top:262.41px;width:17.20px;height:9.17px;line-height:9.97px;background:#fff;border-right:1px solid #ececec;border-bottom:1px solid #ececec;font-size:6.1px"><span style="display:inline-block;transform:scaleX(.91)"></span></div>
<div class="cell" style="left:190.70px;top:262.41px;width:41.80px;height:9.17px;line-height:9.97px;background:#fff;border-right:1px solid #ececec;border-bottom:1px solid #ececec;font-size:6.1px"><span style="display:inline-block;transform:scaleX(.91)">SLV-Sismico</span></div>
<div class="cell" style="left:232.50px;top:262.41px;width:30.70px;height:9.17px;line-height:9.97px;background:#fff;border-right:1px solid #ececec;border-bottom:1px solid #ececec;font-size:6.1px"><span style="display:inline-block;transform:scaleX(.91)">Dir +Y</span></div>
<svg class="abs" style="left:179.20px;top:263.91px" width="6.800" height="6.600" viewBox="0 0 6.800 6.600"><rect x="0.400" y="0.400" width="6" height="5.800" fill="#fff" stroke="#3a3a3a" stroke-width="0.750"/><path d="M0.800 0.800l5.200 5M6 0.800L0.800 5.800" stroke="#3a3a3a" stroke-width="0.600"/></svg>
<div class="cell" style="left:112.50px;top:271.58px;width:61.00px;height:9.17px;line-height:9.97px;background:#fff;border-right:1px solid #ececec;border-bottom:1px solid #ececec;font-size:6.1px"><span style="display:inline-block;transform:scaleX(.91)">10: SLV (-0.3X-Y+ecc)</span></div>
<div class="cell" style="left:173.50px;top:271.58px;width:17.20px;height:9.17px;line-height:9.97px;background:#fff;border-right:1px solid #ececec;border-bottom:1px solid #ececec;font-size:6.1px"><span style="display:inline-block;transform:scaleX(.91)"></span></div>
<div class="cell" style="left:190.70px;top:271.58px;width:41.80px;height:9.17px;line-height:9.97px;background:#fff;border-right:1px solid #ececec;border-bottom:1px solid #ececec;font-size:6.1px"><span style="display:inline-block;transform:scaleX(.91)">SLV-Sismico</span></div>
<div class="cell" style="left:232.50px;top:271.58px;width:30.70px;height:9.17px;line-height:9.97px;background:#fff;border-right:1px solid #ececec;border-bottom:1px solid #ececec;font-size:6.1px"><span style="display:inline-block;transform:scaleX(.91)">Dir -Y</span></div>
<svg class="abs" style="left:179.20px;top:273.08px" width="6.800" height="6.600" viewBox="0 0 6.800 6.600"><rect x="0.400" y="0.400" width="6" height="5.800" fill="#fff" stroke="#3a3a3a" stroke-width="0.750"/><path d="M0.800 0.800l5.200 5M6 0.800L0.800 5.800" stroke="#3a3a3a" stroke-width="0.600"/></svg>
<div class="cell" style="left:112.50px;top:280.75px;width:61.00px;height:9.17px;line-height:9.97px;background:#fff;border-right:1px solid #ececec;border-bottom:1px solid #ececec;font-size:6.1px"><span style="display:inline-block;transform:scaleX(.91)">11: SLV (-0.3X-Y-ecc)</span></div>
<div class="cell" style="left:173.50px;top:280.75px;width:17.20px;height:9.17px;line-height:9.97px;background:#fff;border-right:1px solid #ececec;border-bottom:1px solid #ececec;font-size:6.1px"><span style="display:inline-block;transform:scaleX(.91)"></span></div>
<div class="cell" style="left:190.70px;top:280.75px;width:41.80px;height:9.17px;line-height:9.97px;background:#fff;border-right:1px solid #ececec;border-bottom:1px solid #ececec;font-size:6.1px"><span style="display:inline-block;transform:scaleX(.91)">SLV-Sismico</span></div>
<div class="cell" style="left:232.50px;top:280.75px;width:30.70px;height:9.17px;line-height:9.97px;background:#fff;border-right:1px solid #ececec;border-bottom:1px solid #ececec;font-size:6.1px"><span style="display:inline-block;transform:scaleX(.91)">Dir -Y</span></div>
<svg class="abs" style="left:179.20px;top:282.25px" width="6.800" height="6.600" viewBox="0 0 6.800 6.600"><rect x="0.400" y="0.400" width="6" height="5.800" fill="#fff" stroke="#3a3a3a" stroke-width="0.750"/><path d="M0.800 0.800l5.200 5M6 0.800L0.800 5.800" stroke="#3a3a3a" stroke-width="0.600"/></svg>
<div class="cell" style="left:112.50px;top:289.92px;width:61.00px;height:9.17px;line-height:9.97px;background:#fff;border-right:1px solid #ececec;border-bottom:1px solid #ececec;font-size:6.1px"><span style="display:inline-block;transform:scaleX(.91)">12: Raro 1</span></div>
<div class="cell" style="left:173.50px;top:289.92px;width:17.20px;height:9.17px;line-height:9.97px;background:#fff;border-right:1px solid #ececec;border-bottom:1px solid #ececec;font-size:6.1px"><span style="display:inline-block;transform:scaleX(.91)"></span></div>
<div class="cell" style="left:190.70px;top:289.92px;width:41.80px;height:9.17px;line-height:9.97px;background:#fff;border-right:1px solid #ececec;border-bottom:1px solid #ececec;font-size:6.1px"><span style="display:inline-block;transform:scaleX(.91)">SLE-Raro</span></div>
<div class="cell" style="left:232.50px;top:289.92px;width:30.70px;height:9.17px;line-height:9.97px;background:#fff;border-right:1px solid #ececec;border-bottom:1px solid #ececec;font-size:6.1px"><span style="display:inline-block;transform:scaleX(.91)">[---]</span></div>
<svg class="abs" style="left:179.20px;top:291.42px" width="6.800" height="6.600" viewBox="0 0 6.800 6.600"><rect x="0.400" y="0.400" width="6" height="5.800" fill="#fff" stroke="#3a3a3a" stroke-width="0.750"/><path d="M0.800 0.800l5.200 5M6 0.800L0.800 5.800" stroke="#3a3a3a" stroke-width="0.600"/></svg>
<div class="cell" style="left:112.50px;top:299.09px;width:61.00px;height:9.17px;line-height:9.97px;background:#fff;border-right:1px solid #ececec;border-bottom:1px solid #ececec;font-size:6.1px"><span style="display:inline-block;transform:scaleX(.91)">13: Raro 2</span></div>
<div class="cell" style="left:173.50px;top:299.09px;width:17.20px;height:9.17px;line-height:9.97px;background:#fff;border-right:1px solid #ececec;border-bottom:1px solid #ececec;font-size:6.1px"><span style="display:inline-block;transform:scaleX(.91)"></span></div>
<div class="cell" style="left:190.70px;top:299.09px;width:41.80px;height:9.17px;line-height:9.97px;background:#fff;border-right:1px solid #ececec;border-bottom:1px solid #ececec;font-size:6.1px"><span style="display:inline-block;transform:scaleX(.91)">SLE-Raro</span></div>
<div class="cell" style="left:232.50px;top:299.09px;width:30.70px;height:9.17px;line-height:9.97px;background:#fff;border-right:1px solid #ececec;border-bottom:1px solid #ececec;font-size:6.1px"><span style="display:inline-block;transform:scaleX(.91)">[---]</span></div>
<svg class="abs" style="left:179.20px;top:300.59px" width="6.800" height="6.600" viewBox="0 0 6.800 6.600"><rect x="0.400" y="0.400" width="6" height="5.800" fill="#fff" stroke="#3a3a3a" stroke-width="0.750"/><path d="M0.800 0.800l5.200 5M6 0.800L0.800 5.800" stroke="#3a3a3a" stroke-width="0.600"/></svg>
<div class="cell" style="left:112.50px;top:308.26px;width:61.00px;height:9.17px;line-height:9.97px;background:#fff;border-right:1px solid #ececec;border-bottom:1px solid #ececec;font-size:6.1px"><span style="display:inline-block;transform:scaleX(.91)">14: Raro 3</span></div>
<div class="cell" style="left:173.50px;top:308.26px;width:17.20px;height:9.17px;line-height:9.97px;background:#fff;border-right:1px solid #ececec;border-bottom:1px solid #ececec;font-size:6.1px"><span style="display:inline-block;transform:scaleX(.91)"></span></div>
<div class="cell" style="left:190.70px;top:308.26px;width:41.80px;height:9.17px;line-height:9.97px;background:#fff;border-right:1px solid #ececec;border-bottom:1px solid #ececec;font-size:6.1px"><span style="display:inline-block;transform:scaleX(.91)">SLE-Raro</span></div>
<div class="cell" style="left:232.50px;top:308.26px;width:30.70px;height:9.17px;line-height:9.97px;background:#fff;border-right:1px solid #ececec;border-bottom:1px solid #ececec;font-size:6.1px"><span style="display:inline-block;transform:scaleX(.91)">[---]</span></div>
<svg class="abs" style="left:179.20px;top:309.76px" width="6.800" height="6.600" viewBox="0 0 6.800 6.600"><rect x="0.400" y="0.400" width="6" height="5.800" fill="#fff" stroke="#3a3a3a" stroke-width="0.750"/><path d="M0.800 0.800l5.200 5M6 0.800L0.800 5.800" stroke="#3a3a3a" stroke-width="0.600"/></svg>
<div class="cell" style="left:112.50px;top:317.43px;width:61.00px;height:9.17px;line-height:9.97px;background:#fff;border-right:1px solid #ececec;border-bottom:1px solid #ececec;font-size:6.1px"><span style="display:inline-block;transform:scaleX(.91)">15: Freq 1</span></div>
<div class="cell" style="left:173.50px;top:317.43px;width:17.20px;height:9.17px;line-height:9.97px;background:#fff;border-right:1px solid #ececec;border-bottom:1px solid #ececec;font-size:6.1px"><span style="display:inline-block;transform:scaleX(.91)"></span></div>
<div class="cell" style="left:190.70px;top:317.43px;width:41.80px;height:9.17px;line-height:9.97px;background:#fff;border-right:1px solid #ececec;border-bottom:1px solid #ececec;font-size:6.1px"><span style="display:inline-block;transform:scaleX(.91)">SLE-Freq.</span></div>
<div class="cell" style="left:232.50px;top:317.43px;width:30.70px;height:9.17px;line-height:9.97px;background:#fff;border-right:1px solid #ececec;border-bottom:1px solid #ececec;font-size:6.1px"><span style="display:inline-block;transform:scaleX(.91)">[---]</span></div>
<svg class="abs" style="left:179.20px;top:318.93px" width="6.800" height="6.600" viewBox="0 0 6.800 6.600"><rect x="0.400" y="0.400" width="6" height="5.800" fill="#fff" stroke="#3a3a3a" stroke-width="0.750"/><path d="M0.800 0.800l5.200 5M6 0.800L0.800 5.800" stroke="#3a3a3a" stroke-width="0.600"/></svg>
<div class="cell" style="left:112.50px;top:326.60px;width:61.00px;height:9.17px;line-height:9.97px;background:#fff;border-right:1px solid #ececec;border-bottom:1px solid #ececec;font-size:6.1px"><span style="display:inline-block;transform:scaleX(.91)">16: Freq 2</span></div>
<div class="cell" style="left:173.50px;top:326.60px;width:17.20px;height:9.17px;line-height:9.97px;background:#fff;border-right:1px solid #ececec;border-bottom:1px solid #ececec;font-size:6.1px"><span style="display:inline-block;transform:scaleX(.91)"></span></div>
<div class="cell" style="left:190.70px;top:326.60px;width:41.80px;height:9.17px;line-height:9.97px;background:#fff;border-right:1px solid #ececec;border-bottom:1px solid #ececec;font-size:6.1px"><span style="display:inline-block;transform:scaleX(.91)">SLE-Freq.</span></div>
<div class="cell" style="left:232.50px;top:326.60px;width:30.70px;height:9.17px;line-height:9.97px;background:#fff;border-right:1px solid #ececec;border-bottom:1px solid #ececec;font-size:6.1px"><span style="display:inline-block;transform:scaleX(.91)">[---]</span></div>
<svg class="abs" style="left:179.20px;top:328.10px" width="6.800" height="6.600" viewBox="0 0 6.800 6.600"><rect x="0.400" y="0.400" width="6" height="5.800" fill="#fff" stroke="#3a3a3a" stroke-width="0.750"/><path d="M0.800 0.800l5.200 5M6 0.800L0.800 5.800" stroke="#3a3a3a" stroke-width="0.600"/></svg>
<div class="cell" style="left:112.50px;top:335.77px;width:61.00px;height:9.17px;line-height:9.97px;background:#fff;border-right:1px solid #ececec;border-bottom:1px solid #ececec;font-size:6.1px"><span style="display:inline-block;transform:scaleX(.91)">17: Freq 3</span></div>
<div class="cell" style="left:173.50px;top:335.77px;width:17.20px;height:9.17px;line-height:9.97px;background:#fff;border-right:1px solid #ececec;border-bottom:1px solid #ececec;font-size:6.1px"><span style="display:inline-block;transform:scaleX(.91)"></span></div>
<div class="cell" style="left:190.70px;top:335.77px;width:41.80px;height:9.17px;line-height:9.97px;background:#fff;border-right:1px solid #ececec;border-bottom:1px solid #ececec;font-size:6.1px"><span style="display:inline-block;transform:scaleX(.91)">SLE-Freq.</span></div>
<div class="cell" style="left:232.50px;top:335.77px;width:30.70px;height:9.17px;line-height:9.97px;background:#fff;border-right:1px solid #ececec;border-bottom:1px solid #ececec;font-size:6.1px"><span style="display:inline-block;transform:scaleX(.91)">[---]</span></div>
<svg class="abs" style="left:179.20px;top:337.27px" width="6.800" height="6.600" viewBox="0 0 6.800 6.600"><rect x="0.400" y="0.400" width="6" height="5.800" fill="#fff" stroke="#3a3a3a" stroke-width="0.750"/><path d="M0.800 0.800l5.200 5M6 0.800L0.800 5.800" stroke="#3a3a3a" stroke-width="0.600"/></svg>
<div class="cell" style="left:112.50px;top:344.94px;width:61.00px;height:9.17px;line-height:9.97px;background:#fff;border-right:1px solid #ececec;border-bottom:1px solid #ececec;font-size:6.1px"><span style="display:inline-block;transform:scaleX(.91)">18: Qp</span></div>
<div class="cell" style="left:173.50px;top:344.94px;width:17.20px;height:9.17px;line-height:9.97px;background:#fff;border-right:1px solid #ececec;border-bottom:1px solid #ececec;font-size:6.1px"><span style="display:inline-block;transform:scaleX(.91)"></span></div>
<div class="cell" style="left:190.70px;top:344.94px;width:41.80px;height:9.17px;line-height:9.97px;background:#fff;border-right:1px solid #ececec;border-bottom:1px solid #ececec;font-size:6.1px"><span style="display:inline-block;transform:scaleX(.91)">SLE-Q.Perman.</span></div>
<div class="cell" style="left:232.50px;top:344.94px;width:30.70px;height:9.17px;line-height:9.97px;background:#fff;border-right:1px solid #ececec;border-bottom:1px solid #ececec;font-size:6.1px"><span style="display:inline-block;transform:scaleX(.91)">[---]</span></div>
<svg class="abs" style="left:179.20px;top:346.44px" width="6.800" height="6.600" viewBox="0 0 6.800 6.600"><rect x="0.400" y="0.400" width="6" height="5.800" fill="#fff" stroke="#3a3a3a" stroke-width="0.750"/><path d="M0.800 0.800l5.200 5M6 0.800L0.800 5.800" stroke="#3a3a3a" stroke-width="0.600"/></svg>
<div class="abs" style="left:179.500px;top:355.61px;width:6.200px;height:0.800px;background:#555"></div>
<div class="abs" style="left:302.500px;top:134.200px;width:8px;height:221.600px;background:#f0f0f0"></div>
<div class="abs" style="left:303px;top:143px;width:7px;height:8px;background:#cdcdcd"></div>
<svg class="abs" style="left:302.500px;top:134.200px" width="8" height="222" viewBox="0 0 8 222"><path d="M2.200 5.200L4 3.400l1.800 1.800M2.200 216.600L4 218.400l1.800-1.800" fill="none" stroke="#484848" stroke-width="0.850"/></svg>
<div class="t" style="left:113.9px;top:361.1px;font-size:6.2px;color:#000;transform-origin:0 0;transform:scaleX(0.904);">Combinazione gravitazionale:</div>
<div class="abs" style="left:195.500px;top:360.300px;width:115.200px;height:8.600px;background:#e4e4e4;border:1px solid #adadad"></div>
<div class="t" style="left:197.6px;top:361.1px;font-size:6.2px;color:#000;transform-origin:0 0;transform:scaleX(1.064);">18: Qp</div>
<svg class="abs" style="left:302px;top:361px" width="8" height="8" viewBox="0 0 8 8"><path d="M2 2.800L4 4.800l2-2" fill="none" stroke="#444" stroke-width="0.700"/></svg>
<div class="btn" style="left:186.500px;top:380.600px;width:41.200px;height:10.800px;border-color:#0a78d7;box-shadow:inset 0 0 0 0.500px #0a78d7"></div>
<div class="btn" style="left:231.500px;top:380.600px;width:41.200px;height:10.800px"></div>
<div class="btn" style="left:277px;top:380.600px;width:40.600px;height:10.800px"></div>
<div class="t" style="left:203.0px;top:383.1px;font-size:6.1px;color:#000;transform-origin:0 0;transform:scaleX(0.919);">OK</div>
<div class="t" style="left:242.9px;top:383.1px;font-size:6.1px;color:#000;transform-origin:0 0;transform:scaleX(0.885);">Annulla</div>
<div class="t" style="left:295.4px;top:383.1px;font-size:6.1px;color:#000;transform-origin:0 0;transform:scaleX(0.825);">?</div>
<svg class="abs" style="left:314px;top:389px" width="7" height="7" viewBox="0 0 7 7"><path d="M6.500 1L1 6.500M6.500 3L3 6.500M6.500 5L5 6.500" stroke="#b8b8b8" stroke-width="0.600"/></svg>
</div>
</body></html>
